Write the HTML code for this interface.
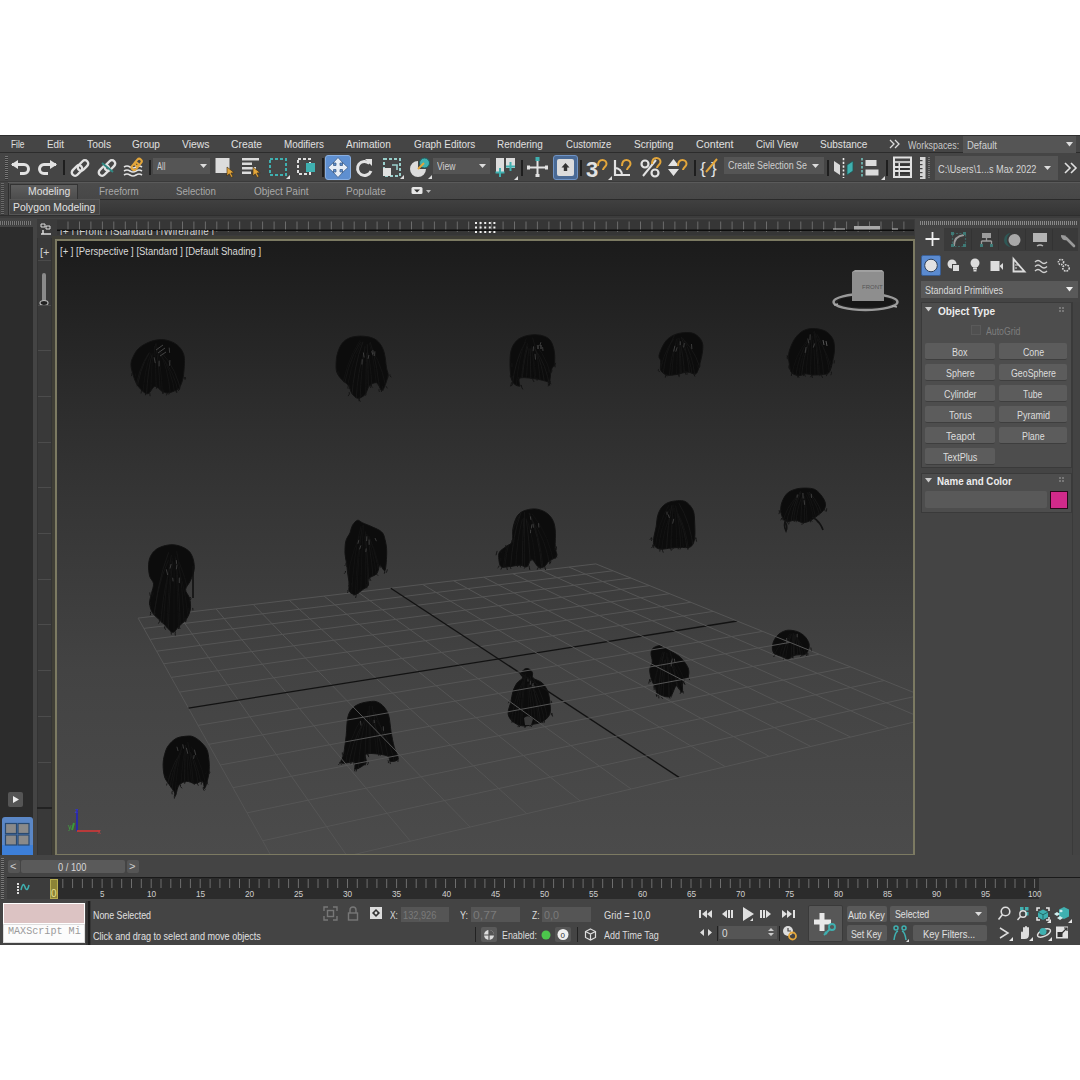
<!DOCTYPE html>
<html><head><meta charset="utf-8">
<style>
*{margin:0;padding:0;box-sizing:border-box}
html,body{width:1080px;height:1080px;background:#fff;overflow:hidden;font-family:"Liberation Sans",sans-serif;font-size:11px;color:#ddd}
.a{position:absolute}
.t{position:absolute;white-space:nowrap;line-height:1}
svg{overflow:visible}
</style></head><body>

<div class="a" style="left:0px;top:135px;width:1080px;height:810px;background:#444;"></div>
<div class="a" style="left:0px;top:135px;width:1080px;height:18px;background:#454545;"></div>
<div class="a" style="left:0px;top:152px;width:1080px;height:1px;background:#2c2c2c;"></div>
<div class="a" style="left:0px;top:135px;width:1080px;height:1px;background:#2e2e2e;"></div>
<div class="t" style="left:10.50px;top:139px;font-size:11px;color:#e0e0e0;transform:scaleX(0.761);transform-origin:0 0;">File</div>
<div class="t" style="left:47.00px;top:139px;font-size:11px;color:#e0e0e0;transform:scaleX(0.895);transform-origin:0 0;">Edit</div>
<div class="t" style="left:87.00px;top:139px;font-size:11px;color:#e0e0e0;transform:scaleX(0.937);transform-origin:0 0;">Tools</div>
<div class="t" style="left:132.00px;top:139px;font-size:11px;color:#e0e0e0;transform:scaleX(0.914);transform-origin:0 0;">Group</div>
<div class="t" style="left:182.00px;top:139px;font-size:11px;color:#e0e0e0;transform:scaleX(0.944);transform-origin:0 0;">Views</div>
<div class="t" style="left:231.00px;top:139px;font-size:11px;color:#e0e0e0;transform:scaleX(0.939);transform-origin:0 0;">Create</div>
<div class="t" style="left:283.75px;top:139px;font-size:11px;color:#e0e0e0;transform:scaleX(0.896);transform-origin:0 0;">Modifiers</div>
<div class="t" style="left:346.00px;top:139px;font-size:11px;color:#e0e0e0;transform:scaleX(0.916);transform-origin:0 0;">Animation</div>
<div class="t" style="left:413.75px;top:139px;font-size:11px;color:#e0e0e0;transform:scaleX(0.902);transform-origin:0 0;">Graph Editors</div>
<div class="t" style="left:496.75px;top:139px;font-size:11px;color:#e0e0e0;transform:scaleX(0.901);transform-origin:0 0;">Rendering</div>
<div class="t" style="left:565.75px;top:139px;font-size:11px;color:#e0e0e0;transform:scaleX(0.870);transform-origin:0 0;">Customize</div>
<div class="t" style="left:633.75px;top:139px;font-size:11px;color:#e0e0e0;transform:scaleX(0.918);transform-origin:0 0;">Scripting</div>
<div class="t" style="left:695.50px;top:139px;font-size:11px;color:#e0e0e0;transform:scaleX(0.974);transform-origin:0 0;">Content</div>
<div class="t" style="left:755.50px;top:139px;font-size:11px;color:#e0e0e0;transform:scaleX(0.884);transform-origin:0 0;">Civil View</div>
<div class="t" style="left:820.00px;top:139px;font-size:11px;color:#e0e0e0;transform:scaleX(0.913);transform-origin:0 0;">Substance</div>
<svg class="a" style="left:889px;top:139px;" width="11" height="10" viewBox="0 0 11 10"><path d="M1 1L5 5L1 9M6 1L10 5L6 9" fill="none" stroke="#dcdcdc" stroke-width="1.3"/></svg>
<div class="t" style="left:907.50px;top:141px;font-size:10px;color:#c8c8c8;transform:scaleX(0.889);transform-origin:0 0;">Workspaces:</div>
<div class="a" style="left:963px;top:136px;width:113px;height:17px;background:#555;"></div>
<div class="t" style="left:967.00px;top:141px;font-size:10px;color:#d0d0d0;transform:scaleX(0.945);transform-origin:0 0;">Default</div>
<svg class="a" style="left:1066px;top:142px;" width="8" height="5" viewBox="0 0 8 5"><path d="M0 0H7L3.5 4.5Z" fill="#ddd"/></svg>
<div class="a" style="left:0px;top:153px;width:1080px;height:29px;background:#454545;"></div>
<div class="a" style="left:0px;top:181px;width:1080px;height:1px;background:#3a3a3a;"></div>
<div class="a" style="left:5px;top:156px;width:3px;height:24px;background:repeating-linear-gradient(#777 0 1px,#333 1px 2px);"></div>
<svg class="a" style="left:10px;top:159px;" width="22" height="18" viewBox="0 0 22 18"><path d="M2 5.5H14a4.5 4.5 0 0 1 0 9H10" stroke="#e2e2e2" stroke-width="3" fill="none"/><path d="M1 5.5L8 1V10Z" fill="#e2e2e2"/></svg>
<svg class="a" style="left:36px;top:159px;" width="22" height="18" viewBox="0 0 22 18"><path d="M20 5.5H8a4.5 4.5 0 0 0 0 9H12" stroke="#e2e2e2" stroke-width="3" fill="none"/><path d="M21 5.5L14 1V10Z" fill="#e2e2e2"/></svg>
<div class="a" style="left:63px;top:160px;width:2px;height:15px;background:#1e1e1e;"></div>
<svg class="a" style="left:71px;top:160px;" width="18" height="16" viewBox="0 0 18 16"><g fill="none" stroke="#e2e2e2" stroke-width="2.4"><rect x="-3.3" y="-6" width="6.6" height="12" rx="3.3" transform="translate(6 10.5) rotate(45)"/><rect x="-3.3" y="-6" width="6.6" height="12" rx="3.3" transform="translate(12 5.5) rotate(45)"/></g></svg>
<svg class="a" style="left:98px;top:160px;" width="18" height="16" viewBox="0 0 18 16"><g fill="none" stroke="#e2e2e2" stroke-width="2.4"><rect x="-3.3" y="-6" width="6.6" height="12" rx="3.3" transform="translate(6 10.5) rotate(45)"/><rect x="-3.3" y="-6" width="6.6" height="12" rx="3.3" transform="translate(12 5.5) rotate(45)"/></g><path d="M4 3L15 12" stroke="#2f8a84" stroke-width="2"/></svg>
<svg class="a" style="left:123px;top:157px;" width="21" height="20" viewBox="0 0 21 20"><g fill="none" stroke="#e2e2e2" stroke-width="1.6"><path d="M1 10q3-2 6 0t6 0t6 0"/><path d="M1 14q3-2 6 0t6 0t6 0"/><path d="M1 18q3-2 6 0t6 0t6 0"/></g><g fill="none" stroke="#e3a63b" stroke-width="2"><rect x="-2.5" y="-6" width="5" height="8" rx="2.5" transform="translate(14 7) rotate(40)"/><rect x="-2.5" y="-1" width="5" height="8" rx="2.5" transform="translate(14 7) rotate(40)"/></g></svg>
<div class="a" style="left:149px;top:160px;width:2px;height:15px;background:#1e1e1e;"></div>
<div class="a" style="left:153px;top:158px;width:57px;height:16px;background:#555;"></div>
<div class="t" style="left:157.00px;top:162px;font-size:10px;color:#cfcfcf;transform:scaleX(0.764);transform-origin:0 0;">All</div>
<svg class="a" style="left:200px;top:164px;" width="7" height="4" viewBox="0 0 7 4"><path d="M0 0H7L3.5 4Z" fill="#ddd"/></svg>
<svg class="a" style="left:214px;top:157px;" width="22" height="22" viewBox="0 0 22 22"><rect x="1.5" y="1" width="14" height="15" fill="#dcdcdc"/><path d="M13 10l0 9l2.3-2.2l2 3.6l1.6-.9l-2-3.5l3.2-.3z" fill="#e3a63b" stroke="#3a2a10" stroke-width=".6"/></svg>
<svg class="a" style="left:241px;top:157px;" width="22" height="22" viewBox="0 0 22 22"><g fill="#dcdcdc"><rect x="1" y="1" width="17" height="2.5"/><rect x="1" y="5.5" width="10" height="2.5"/><rect x="1" y="10" width="14" height="2.5"/><rect x="1" y="14.5" width="9" height="2.5"/></g><path d="M12 10l0 9l2.3-2.2l2 3.6l1.6-.9l-2-3.5l3.2-.3z" fill="#e3a63b" stroke="#3a2a10" stroke-width=".6"/></svg>
<svg class="a" style="left:268px;top:157px;" width="22" height="22" viewBox="0 0 22 22"><rect x="2" y="2" width="16" height="16" fill="none" stroke="#3fb0b0" stroke-width="2" stroke-dasharray="3 2"/><path d="M22 22h-4l4-4z" fill="#ddd"/></svg>
<svg class="a" style="left:296px;top:157px;" width="22" height="22" viewBox="0 0 22 22"><rect x="2" y="2" width="12" height="15" fill="none" stroke="#e0e0e0" stroke-width="2" stroke-dasharray="3 2"/><rect x="10" y="6" width="9" height="9" fill="#3fb0b0"/></svg>
<div class="a" style="left:322px;top:158px;width:2px;height:19px;background:#1e1e1e;"></div>
<div class="a" style="left:325px;top:155px;width:26px;height:25px;background:#5e8fd0;border-radius:3px;border:1px solid #88aee0"></div>
<svg class="a" style="left:325px;top:155px;" width="26" height="25" viewBox="0 0 26 25"><path d="M13 2.5L18 8H15V10.5H17.5V7.5L23 12.5L17.5 17.5V14.5H15V17H18L13 22.5L8 17H11V14.5H8.5V17.5L3 12.5L8.5 7.5V10.5H11V8H8Z" fill="#e8eef6" stroke="#3f5f8a" stroke-width=".8"/></svg>
<svg class="a" style="left:356px;top:157px;" width="18" height="22" viewBox="0 0 18 22"><path d="M13.5 6.5A7 7 0 1 0 15 14" fill="none" stroke="#e2e2e2" stroke-width="3"/><path d="M9 2h7v7z" fill="#e2e2e2"/></svg>
<svg class="a" style="left:381px;top:157px;" width="23" height="22" viewBox="0 0 23 22"><rect x="3" y="2" width="16" height="17" fill="none" stroke="#9ad0cc" stroke-width="2" stroke-dasharray="3 2"/><rect x="2" y="11" width="8" height="8" fill="#e0e0e0"/><path d="M11 8h5v5" fill="none" stroke="#9ad0cc" stroke-width="1.6"/><path d="M23 22h-4l4-4z" fill="#ddd"/></svg>
<svg class="a" style="left:409px;top:157px;" width="23" height="22" viewBox="0 0 23 22"><path d="M9 12V4A8 8 0 1 0 17 12Z" fill="#dcdcdc"/><circle cx="15.5" cy="6" r="5" fill="#3fb0b0" stroke="#1e5e5e" stroke-width="1"/><path d="M9 12L15 6" stroke="#e3a63b" stroke-width="2"/><path d="M23 22h-4l4-4z" fill="#ddd"/></svg>
<div class="a" style="left:433px;top:158px;width:57px;height:16px;background:#555;"></div>
<div class="t" style="left:437.00px;top:162px;font-size:10px;color:#cfcfcf;transform:scaleX(0.860);transform-origin:0 0;">View</div>
<svg class="a" style="left:479px;top:164px;" width="7" height="4" viewBox="0 0 7 4"><path d="M0 0H7L3.5 4Z" fill="#ddd"/></svg>
<svg class="a" style="left:494px;top:156px;" width="24" height="24" viewBox="0 0 24 24"><rect x="2" y="2" width="8" height="15" fill="#dcdcdc"/><rect x="12" y="2" width="9" height="10" fill="#dcdcdc"/><g stroke="#3fb0b0" stroke-width="2"><path d="M6 12v9M1.5 16.5h9"/><path d="M16.5 6v9M12 10.5h9"/></g><path d="M24 24h-4l4-4z" fill="#ddd"/></svg>
<div class="a" style="left:521px;top:160px;width:2px;height:16px;background:#1e1e1e;"></div>
<svg class="a" style="left:527px;top:156px;" width="21" height="22" viewBox="0 0 21 22"><g stroke="#e2e2e2" stroke-width="2"><path d="M10.5 4V20M1 11.5H20"/></g><g fill="#e2e2e2"><rect x="0" y="9.5" width="3" height="4"/><rect x="18" y="9.5" width="3" height="4"/><rect x="8.5" y="18" width="4" height="3"/></g><rect x="8.5" y="1" width="4" height="4" fill="#3fb0b0"/></svg>
<div class="a" style="left:553px;top:155px;width:25px;height:25px;background:#4a6a95;border-radius:3px;border:1px solid #6f93c4"></div>
<div class="a" style="left:557px;top:159px;width:17px;height:17px;background:#dcdcdc;border-radius:2px"></div>
<svg class="a" style="left:557px;top:159px;" width="17" height="17" viewBox="0 0 17 17"><path d="M8.5 4l4 4.5h-2.3v3.5h-3.4v-3.5h-2.3z" fill="#333"/></svg>
<div class="a" style="left:580px;top:160px;width:2px;height:16px;background:#1e1e1e;"></div>
<svg class="a" style="left:586px;top:156px;" width="26" height="24" viewBox="0 0 26 24"><text x="0" y="21" font-family="Liberation Sans" font-weight="bold" font-size="22" fill="#e2e2e2">3</text><path d="M12 10c0-4 2-6 4.5-6s4 2 4 4c0 2.5-3.5 3.5-3.5 6" fill="none" stroke="#e3a63b" stroke-width="2"/><path d="M26 24h-4l4-4z" fill="#ddd"/></svg>
<svg class="a" style="left:613px;top:156px;" width="22" height="24" viewBox="0 0 22 24"><path d="M2 4V19H17" fill="none" stroke="#e2e2e2" stroke-width="2.2"/><path d="M2 12a7 7 0 0 1 7 7" fill="none" stroke="#e2e2e2" stroke-width="2"/><path d="M9 10c0-4 2-6 4.5-6s4 2 4 4c0 2.5-3.5 3.5-3.5 6" fill="none" stroke="#e3a63b" stroke-width="2"/></svg>
<svg class="a" style="left:640px;top:156px;" width="22" height="24" viewBox="0 0 22 24"><circle cx="5" cy="8" r="3.5" fill="none" stroke="#e2e2e2" stroke-width="2.2"/><circle cx="15" cy="17" r="3.5" fill="none" stroke="#e2e2e2" stroke-width="2.2"/><path d="M3 20L16 4" stroke="#e2e2e2" stroke-width="2"/><path d="M12 8c0-4 2-6 4.5-6s4 2 4 4c0 2.5-3.5 3.5-3.5 6" fill="none" stroke="#e3a63b" stroke-width="2"/></svg>
<svg class="a" style="left:667px;top:156px;" width="22" height="24" viewBox="0 0 22 24"><path d="M1 10L6.5 3L12 10Z M1 13L6.5 20L12 13Z" fill="#e2e2e2"/><path d="M11 10c0-4 2-6 4.5-6s4 2 4 4c0 2.5-3.5 3.5-3.5 6" fill="none" stroke="#e3a63b" stroke-width="2"/></svg>
<div class="a" style="left:694px;top:160px;width:2px;height:16px;background:#1e1e1e;"></div>
<svg class="a" style="left:700px;top:156px;" width="22" height="24" viewBox="0 0 22 24"><text x="0" y="18" font-family="Liberation Sans" font-size="17" fill="#e2e2e2">{</text><text x="11" y="18" font-family="Liberation Sans" font-size="17" fill="#e2e2e2">}</text><path d="M6 16L17 3" stroke="#e3a63b" stroke-width="2"/></svg>
<div class="a" style="left:724px;top:157px;width:100px;height:17px;background:#555;"></div>
<div class="t" style="left:728.30px;top:161px;font-size:10px;color:#cfcfcf;transform:scaleX(0.888);transform-origin:0 0;">Create Selection Se</div>
<svg class="a" style="left:812px;top:164px;" width="7" height="4" viewBox="0 0 7 4"><path d="M0 0H7L3.5 4Z" fill="#ddd"/></svg>
<div class="a" style="left:827px;top:160px;width:2px;height:16px;background:#1e1e1e;"></div>
<svg class="a" style="left:832px;top:156px;" width="24" height="24" viewBox="0 0 24 24"><path d="M2 5L8 9V19L2 15Z" fill="#d8d8d8"/><path d="M21 5L15 9V19L21 15Z" fill="#3fb0b0" stroke="#1f5654" stroke-width=".8"/><path d="M11.5 2V22" stroke="#eee" stroke-width="1.6" stroke-dasharray="2.2 1.6"/></svg>
<svg class="a" style="left:860px;top:156px;" width="25" height="24" viewBox="0 0 25 24"><path d="M2 2V22" stroke="#6aa8a4" stroke-width="2" stroke-dasharray="2.5 1.5"/><rect x="5.5" y="4" width="11" height="6" fill="#dcdcdc"/><rect x="5.5" y="13.5" width="13" height="6" fill="#dcdcdc"/><path d="M25 24h-4l4-4z" fill="#ddd"/></svg>
<div class="a" style="left:886px;top:160px;width:2px;height:16px;background:#1e1e1e;"></div>
<svg class="a" style="left:893px;top:156px;" width="20" height="23" viewBox="0 0 20 23"><rect x="1" y="1.5" width="17" height="19.5" fill="none" stroke="#e2e2e2" stroke-width="2"/><path d="M1 6H18" stroke="#e2e2e2" stroke-width="1.6"/><g fill="#333"><rect x="3" y="8" width="2.5" height="2"/><rect x="7" y="8" width="9" height="2"/><rect x="3" y="12" width="2.5" height="2"/><rect x="7" y="12" width="9" height="2"/><rect x="3" y="16" width="2.5" height="2"/><rect x="7" y="16" width="9" height="2"/></g><g fill="#e2e2e2"><rect x="2" y="10" width="15" height="2"/><rect x="2" y="14" width="15" height="2"/><rect x="5.5" y="7" width="1.5" height="13"/></g></svg>
<svg class="a" style="left:919px;top:156px;" width="14" height="24" viewBox="0 0 14 24"><rect x="1" y="1" width="5.5" height="22" fill="#d6d6d6"/><g fill="#444"><rect x="1" y="4" width="2.5" height="1.2"/><rect x="1" y="8" width="2.5" height="1.2"/><rect x="1" y="12" width="2.5" height="1.2"/><rect x="1" y="16" width="2.5" height="1.2"/><rect x="1" y="20" width="2.5" height="1.2"/></g><path d="M10 1V23" stroke="#777" stroke-width="2" stroke-dasharray="1 1"/></svg>
<div class="a" style="left:935px;top:156px;width:123px;height:24px;background:#555;"></div>
<div class="t" style="left:938.30px;top:164px;font-size:11px;color:#d6d6d6;transform:scaleX(0.834);transform-origin:0 0;">C:\Users\1...s Max 2022</div>
<svg class="a" style="left:1044px;top:166px;" width="7" height="4" viewBox="0 0 7 4"><path d="M0 0H7L3.5 4Z" fill="#ddd"/></svg>
<svg class="a" style="left:1064px;top:162px;" width="13" height="12" viewBox="0 0 13 12"><path d="M1 1L6 6L1 11M7 1L12 6L7 11" fill="none" stroke="#e0e0e0" stroke-width="1.6"/></svg>
<div class="a" style="left:0px;top:182px;width:1080px;height:36px;background:#444;"></div>
<div class="a" style="left:0px;top:183px;width:5px;height:34px;background:repeating-linear-gradient(#6a6a6a 0 1px,#3a3a3a 1px 2px);left:1px;width:3px"></div>
<div class="a" style="left:8px;top:182px;width:1072px;height:1px;background:#5a5a5a;"></div>
<div class="a" style="left:8px;top:183px;width:1072px;height:16px;background:linear-gradient(#4c4c4c,#474747);"></div>
<div class="a" style="left:8px;top:183px;width:1px;height:33px;background:#2e2e2e;"></div>
<div class="a" style="left:10px;top:184px;width:68px;height:16px;background:linear-gradient(#5e5e5e,#4b4b4b);border:1px solid #333;border-bottom:none"></div>
<div class="t" style="left:28.40px;top:186px;font-size:11px;color:#e0e0e0;transform:scaleX(0.946);transform-origin:0 0;">Modeling</div>
<div class="t" style="left:98.70px;top:186px;font-size:11px;color:#a8a8a8;transform:scaleX(0.890);transform-origin:0 0;">Freeform</div>
<div class="t" style="left:176.00px;top:186px;font-size:11px;color:#a8a8a8;transform:scaleX(0.880);transform-origin:0 0;">Selection</div>
<div class="t" style="left:253.80px;top:186px;font-size:11px;color:#a8a8a8;transform:scaleX(0.909);transform-origin:0 0;">Object Paint</div>
<div class="t" style="left:345.90px;top:186px;font-size:11px;color:#a8a8a8;transform:scaleX(0.915);transform-origin:0 0;">Populate</div>
<svg class="a" style="left:411px;top:186px;" width="20" height="10" viewBox="0 0 20 10"><rect x="0.5" y="1" width="11" height="7" rx="1.5" fill="#e6e6e6"/><path d="M3 3.5h6l-3 3z" fill="#333"/><path d="M15 4h5l-2.5 3z" fill="#bbb"/></svg>
<div class="a" style="left:78px;top:199px;width:1002px;height:1px;background:#2a2a2a;"></div>
<div class="a" style="left:9px;top:200px;width:1071px;height:15px;background:linear-gradient(#404040,#353535);"></div>
<div class="a" style="left:9px;top:199px;width:91px;height:16px;background:linear-gradient(#4a4a4a,#424242);border:1px solid #555"></div>
<div class="t" style="left:12.70px;top:202px;font-size:11px;color:#e2e2e2;transform:scaleX(0.941);transform-origin:0 0;">Polygon Modeling</div>
<div class="a" style="left:0px;top:215px;width:1080px;height:1px;background:#2e2e2e;"></div>
<div class="a" style="left:0px;top:216px;width:1080px;height:2px;background:#3c3c3c;"></div>
<div class="a" style="left:37px;top:219px;width:878px;height:20px;background:#3b3b3b;"></div>
<div class="a" style="left:57px;top:220px;width:857px;height:15px;background:#363636;"></div>
<svg class="a" style="left:57px;top:220px;" width="857" height="15" viewBox="0 0 857 15"><path d="M11.0 1.5V12" stroke="#6c6c6c" stroke-width="1"/><path d="M22.5 1.5V12" stroke="#6c6c6c" stroke-width="1"/><path d="M33.9 1.5V12" stroke="#6c6c6c" stroke-width="1"/><path d="M45.4 1.5V12" stroke="#6c6c6c" stroke-width="1"/><path d="M56.8 1.5V12" stroke="#6c6c6c" stroke-width="1"/><path d="M68.3 1.5V12" stroke="#6c6c6c" stroke-width="1"/><path d="M79.7 1.5V12" stroke="#6c6c6c" stroke-width="1"/><path d="M91.2 1.5V12" stroke="#6c6c6c" stroke-width="1"/><path d="M102.6 1.5V12" stroke="#6c6c6c" stroke-width="1"/><path d="M114.0 1.5V12" stroke="#6c6c6c" stroke-width="1"/><path d="M125.5 1.5V12" stroke="#6c6c6c" stroke-width="1"/><path d="M136.9 1.5V12" stroke="#6c6c6c" stroke-width="1"/><path d="M148.4 1.5V12" stroke="#6c6c6c" stroke-width="1"/><path d="M159.8 1.5V12" stroke="#6c6c6c" stroke-width="1"/><path d="M171.3 1.5V12" stroke="#6c6c6c" stroke-width="1"/><path d="M182.7 1.5V12" stroke="#6c6c6c" stroke-width="1"/><path d="M194.2 1.5V12" stroke="#6c6c6c" stroke-width="1"/><path d="M205.6 1.5V12" stroke="#6c6c6c" stroke-width="1"/><path d="M217.1 1.5V12" stroke="#6c6c6c" stroke-width="1"/><path d="M228.5 1.5V12" stroke="#6c6c6c" stroke-width="1"/><path d="M240.0 1.5V12" stroke="#6c6c6c" stroke-width="1"/><path d="M251.4 1.5V12" stroke="#6c6c6c" stroke-width="1"/><path d="M262.9 1.5V12" stroke="#6c6c6c" stroke-width="1"/><path d="M274.3 1.5V12" stroke="#6c6c6c" stroke-width="1"/><path d="M285.8 1.5V12" stroke="#6c6c6c" stroke-width="1"/><path d="M297.2 1.5V12" stroke="#6c6c6c" stroke-width="1"/><path d="M308.7 1.5V12" stroke="#6c6c6c" stroke-width="1"/><path d="M320.1 1.5V12" stroke="#6c6c6c" stroke-width="1"/><path d="M331.6 1.5V12" stroke="#6c6c6c" stroke-width="1"/><path d="M343.0 1.5V12" stroke="#6c6c6c" stroke-width="1"/><path d="M354.5 1.5V12" stroke="#6c6c6c" stroke-width="1"/><path d="M365.9 1.5V12" stroke="#6c6c6c" stroke-width="1"/><path d="M377.4 1.5V12" stroke="#6c6c6c" stroke-width="1"/><path d="M388.8 1.5V12" stroke="#6c6c6c" stroke-width="1"/><path d="M400.3 1.5V12" stroke="#6c6c6c" stroke-width="1"/><path d="M411.7 1.5V12" stroke="#6c6c6c" stroke-width="1"/><path d="M423.2 1.5V12" stroke="#6c6c6c" stroke-width="1"/><path d="M434.6 1.5V12" stroke="#6c6c6c" stroke-width="1"/><path d="M446.1 1.5V12" stroke="#6c6c6c" stroke-width="1"/><path d="M457.5 1.5V12" stroke="#6c6c6c" stroke-width="1"/><path d="M469.0 1.5V12" stroke="#6c6c6c" stroke-width="1"/><path d="M480.4 1.5V12" stroke="#6c6c6c" stroke-width="1"/><path d="M491.9 1.5V12" stroke="#6c6c6c" stroke-width="1"/><path d="M503.3 1.5V12" stroke="#6c6c6c" stroke-width="1"/><path d="M514.8 1.5V12" stroke="#6c6c6c" stroke-width="1"/><path d="M526.2 1.5V12" stroke="#6c6c6c" stroke-width="1"/><path d="M537.7 1.5V12" stroke="#6c6c6c" stroke-width="1"/><path d="M549.2 1.5V12" stroke="#6c6c6c" stroke-width="1"/><path d="M560.6 1.5V12" stroke="#6c6c6c" stroke-width="1"/><path d="M572.1 1.5V12" stroke="#6c6c6c" stroke-width="1"/><path d="M583.5 1.5V12" stroke="#6c6c6c" stroke-width="1"/><path d="M595.0 1.5V12" stroke="#6c6c6c" stroke-width="1"/><path d="M606.4 1.5V12" stroke="#6c6c6c" stroke-width="1"/><path d="M617.9 1.5V12" stroke="#6c6c6c" stroke-width="1"/><path d="M629.3 1.5V12" stroke="#6c6c6c" stroke-width="1"/><path d="M640.8 1.5V12" stroke="#6c6c6c" stroke-width="1"/><path d="M652.2 1.5V12" stroke="#6c6c6c" stroke-width="1"/><path d="M663.7 1.5V12" stroke="#6c6c6c" stroke-width="1"/><path d="M675.1 1.5V12" stroke="#6c6c6c" stroke-width="1"/><path d="M686.6 1.5V12" stroke="#6c6c6c" stroke-width="1"/><path d="M698.0 1.5V12" stroke="#6c6c6c" stroke-width="1"/><path d="M709.5 1.5V12" stroke="#6c6c6c" stroke-width="1"/><path d="M720.9 1.5V12" stroke="#6c6c6c" stroke-width="1"/><path d="M732.4 1.5V12" stroke="#6c6c6c" stroke-width="1"/><path d="M743.8 1.5V12" stroke="#6c6c6c" stroke-width="1"/><path d="M755.3 1.5V12" stroke="#6c6c6c" stroke-width="1"/><path d="M766.7 1.5V12" stroke="#6c6c6c" stroke-width="1"/><path d="M778.2 1.5V12" stroke="#6c6c6c" stroke-width="1"/><path d="M789.6 1.5V12" stroke="#6c6c6c" stroke-width="1"/><path d="M801.1 1.5V12" stroke="#6c6c6c" stroke-width="1"/><path d="M812.5 1.5V12" stroke="#6c6c6c" stroke-width="1"/><path d="M824.0 1.5V12" stroke="#6c6c6c" stroke-width="1"/><path d="M835.4 1.5V12" stroke="#6c6c6c" stroke-width="1"/><path d="M846.9 1.5V12" stroke="#6c6c6c" stroke-width="1"/><path d="M0 10.2H857" stroke="#0e0e0e" stroke-width="1.5"/></svg>
<div class="a" style="left:0;top:230px;width:1080px;height:5px;overflow:hidden">
<div class="t" style="left:59.80px;top:-3px;font-size:10px;color:#d0d0d0;transform:scaleX(0.978);transform-origin:0 0;">[+ ] [Front ] [Standard ] [Wireframe ]</div>
</div>
<svg class="a" style="left:39px;top:222px;" width="14" height="13" viewBox="0 0 14 13"><path d="M2 2h4v3H2zM7 4h4v3H7z" fill="none" stroke="#ddd" stroke-width="1"/><path d="M2 12h10M4 8v4" stroke="#ddd" stroke-width="1.5"/></svg>
<svg class="a" style="left:474px;top:221px;" width="24" height="13" viewBox="0 0 24 13"><rect x="1.0" y="1.0" width="2" height="2" fill="#eee"/><rect x="1.0" y="5.5" width="2" height="2" fill="#eee"/><rect x="1.0" y="10.0" width="2" height="2" fill="#eee"/><rect x="5.6" y="1.0" width="2" height="2" fill="#eee"/><rect x="5.6" y="5.5" width="2" height="2" fill="#eee"/><rect x="5.6" y="10.0" width="2" height="2" fill="#eee"/><rect x="10.2" y="1.0" width="2" height="2" fill="#eee"/><rect x="10.2" y="5.5" width="2" height="2" fill="#eee"/><rect x="10.2" y="10.0" width="2" height="2" fill="#eee"/><rect x="14.8" y="1.0" width="2" height="2" fill="#eee"/><rect x="14.8" y="5.5" width="2" height="2" fill="#eee"/><rect x="14.8" y="10.0" width="2" height="2" fill="#eee"/><rect x="19.4" y="1.0" width="2" height="2" fill="#eee"/><rect x="19.4" y="5.5" width="2" height="2" fill="#eee"/><rect x="19.4" y="10.0" width="2" height="2" fill="#eee"/></svg>
<svg class="a" style="left:832px;top:225px;" width="70" height="8" viewBox="0 0 70 8"><rect x="22" y="1" width="26" height="3.5" fill="#a8a8a8"/><path d="M1 4h12M60 4h6" stroke="#bbb" stroke-width="1.2"/></svg>
<div class="a" style="left:0px;top:221px;width:31px;height:4px;background:repeating-linear-gradient(90deg,#777 0 1px,#3a3a3a 1px 2px);"></div>
<div class="a" style="left:0px;top:227px;width:33px;height:628px;background:#2c2c2c;"></div>
<div class="a" style="left:37px;top:238px;width:15px;height:617px;background:#393939;border-left:1px solid #333;border-right:1px solid #333"></div>
<div class="t" style="left:40px;top:247px;font-size:11px;color:#d0d0d0;">[+</div>
<div class="a" style="left:38px;top:260px;width:13px;height:1px;background:#4a4a4a;"></div>
<div class="a" style="left:42px;top:273px;width:4px;height:30px;background:#8a8a8a;border-radius:2px"></div>
<svg class="a" style="left:38px;top:299px;" width="13" height="8" viewBox="0 0 13 8"><ellipse cx="6" cy="4" rx="4" ry="2.5" fill="#222" stroke="#bbb" stroke-width="1.2"/></svg>
<div class="a" style="left:38px;top:305px;width:13px;height:1px;background:#4c4c4c;"></div>
<div class="a" style="left:38px;top:350px;width:13px;height:1px;background:#4c4c4c;"></div>
<div class="a" style="left:38px;top:396px;width:13px;height:1px;background:#4c4c4c;"></div>
<div class="a" style="left:38px;top:442px;width:13px;height:1px;background:#4c4c4c;"></div>
<div class="a" style="left:38px;top:487px;width:13px;height:1px;background:#4c4c4c;"></div>
<div class="a" style="left:38px;top:533px;width:13px;height:1px;background:#4c4c4c;"></div>
<div class="a" style="left:38px;top:579px;width:13px;height:1px;background:#4c4c4c;"></div>
<div class="a" style="left:38px;top:624px;width:13px;height:1px;background:#4c4c4c;"></div>
<div class="a" style="left:38px;top:670px;width:13px;height:1px;background:#4c4c4c;"></div>
<div class="a" style="left:38px;top:716px;width:13px;height:1px;background:#4c4c4c;"></div>
<div class="a" style="left:38px;top:762px;width:13px;height:1px;background:#4c4c4c;"></div>
<div class="a" style="left:37px;top:807px;width:15px;height:2px;background:#222;"></div>
<div class="a" style="left:8px;top:792px;width:15px;height:15px;background:#555;border-radius:2px"></div>
<svg class="a" style="left:8px;top:792px;" width="15" height="15" viewBox="0 0 15 15"><path d="M5 4L11 7.5L5 11Z" fill="#eee"/></svg>
<div class="a" style="left:2px;top:817px;width:31px;height:38px;background:#5b87c6;border-radius:3px"></div>
<div class="a" style="left:2px;top:845px;width:31px;height:10px;background:#3d7fd8;"></div>
<svg class="a" style="left:4px;top:822px;" width="28" height="24" viewBox="0 0 28 24"><g fill="#8a8a8a" stroke="#2a4a70" stroke-width="1.2"><rect x="1.5" y="1.5" width="11" height="10"/><rect x="14" y="1.5" width="11" height="10"/><rect x="1.5" y="13" width="11" height="10"/><rect x="14" y="13" width="11" height="10"/></g></svg>
<div class="a" style="left:52px;top:236px;width:866px;height:624px;background:#3f3e36;"></div>
<div class="a" style="left:55px;top:239px;width:860px;height:617px;background:#7c7a62;"></div>
<div class="a" style="left:57px;top:241px;width:856px;height:613px;background:#26241a;"></div>
<div class="a" style="left:57px;top:241px;width:856px;height:613px;background:linear-gradient(#1b1b1b 0%,#2c2c2c 26%,#353535 42%,#434343 70%,#4b4b4b 100%);"></div>
<svg class="a" style="left:0;top:0;overflow:hidden" width="1080" height="1080" viewBox="0 0 1080 1080"><defs><clipPath id="vp"><rect x="57" y="240" width="856" height="614"/></clipPath></defs><g clip-path="url(#vp)"><clipPath id="hc1"><path d="M161.5 339.6C157.8 339.6 153.4 340.4 149.6 341.9C145.8 343.4 141.3 345.8 138.5 348.5C135.7 351.2 133.8 355.2 132.6 358.0C131.3 360.8 130.9 362.8 131.0 365.5C131.1 368.2 132.1 371.4 133.0 374.4C133.9 377.4 134.8 380.6 136.3 383.3C137.8 386.0 140.2 389.0 142.2 390.7C144.1 392.4 145.9 394.4 148.0 393.7C150.1 393.0 152.6 386.8 154.8 386.3C157.1 385.8 159.4 389.6 161.5 390.7C163.6 391.8 165.2 393.0 167.4 393.0C169.6 393.0 172.8 391.6 174.8 390.7C176.8 389.8 177.9 389.9 179.3 387.8C180.7 385.7 182.2 382.1 183.0 378.0C183.8 373.9 184.3 367.2 184.4 363.3C184.5 359.4 184.5 357.1 183.7 354.4C182.8 351.7 181.3 349.1 179.3 347.0C177.3 344.9 174.9 343.1 171.9 341.9C168.9 340.7 165.2 339.6 161.5 339.6Z"/></clipPath><path d="M161.5 339.6C157.8 339.6 153.4 340.4 149.6 341.9C145.8 343.4 141.3 345.8 138.5 348.5C135.7 351.2 133.8 355.2 132.6 358.0C131.3 360.8 130.9 362.8 131.0 365.5C131.1 368.2 132.1 371.4 133.0 374.4C133.9 377.4 134.8 380.6 136.3 383.3C137.8 386.0 140.2 389.0 142.2 390.7C144.1 392.4 145.9 394.4 148.0 393.7C150.1 393.0 152.6 386.8 154.8 386.3C157.1 385.8 159.4 389.6 161.5 390.7C163.6 391.8 165.2 393.0 167.4 393.0C169.6 393.0 172.8 391.6 174.8 390.7C176.8 389.8 177.9 389.9 179.3 387.8C180.7 385.7 182.2 382.1 183.0 378.0C183.8 373.9 184.3 367.2 184.4 363.3C184.5 359.4 184.5 357.1 183.7 354.4C182.8 351.7 181.3 349.1 179.3 347.0C177.3 344.9 174.9 343.1 171.9 341.9C168.9 340.7 165.2 339.6 161.5 339.6Z" fill="#0c0c0c" stroke="#121212" stroke-width="1"/><g clip-path="url(#hc1)"><path d="M149.0 352.6Q137.5 369.9 134.6 395.7" stroke="#161616" stroke-width=".9" fill="none"/><path d="M149.4 352.6Q138.8 369.8 136.1 395.7" stroke="#181818" stroke-width=".9" fill="none"/><path d="M151.0 353.0Q144.4 370.1 142.7 395.7" stroke="#131313" stroke-width=".9" fill="none"/><path d="M152.0 354.4Q147.6 370.9 146.5 395.7" stroke="#181818" stroke-width=".9" fill="none"/><path d="M153.0 352.6Q151.2 369.8 150.8 395.7" stroke="#131313" stroke-width=".9" fill="none"/><path d="M154.4 345.9Q155.9 365.8 156.3 395.7" stroke="#151515" stroke-width=".9" fill="none"/><path d="M155.4 343.7Q159.3 364.5 160.3 395.7" stroke="#161616" stroke-width=".9" fill="none"/><path d="M156.0 342.6Q161.2 363.9 162.5 395.7" stroke="#131313" stroke-width=".9" fill="none"/><path d="M158.0 347.5Q168.1 366.8 170.6 395.7" stroke="#151515" stroke-width=".9" fill="none"/><path d="M159.1 352.1Q171.9 369.6 175.2 395.7" stroke="#151515" stroke-width=".9" fill="none"/><path d="M160.0 355.0Q175.0 371.3 178.8 395.7" stroke="#151515" stroke-width=".9" fill="none"/><path d="M160.7 351.5Q177.4 369.2 181.6 395.7" stroke="#181818" stroke-width=".9" fill="none"/><path d="M169.9 360.1l-0.3 5.7" stroke="#484848" stroke-width="1" opacity=".8"/><path d="M169.2 347.6l0.4 5.2" stroke="#484848" stroke-width="1" opacity=".8"/><path d="M154.1 357.3l1.2 5.9" stroke="#484848" stroke-width="1" opacity=".8"/><path d="M159.1 360.7l0.0 5.7" stroke="#484848" stroke-width="1" opacity=".8"/></g><path d="M131.4 373.4q0.9 1.4 -0.0 2.7M135.2 373.4q0.7 1.5 -0.1 3.0M137.5 382.3q0.3 1.5 -0.4 3.0M138.2 382.3q0.5 2.0 -1.2 3.9M143.0 389.7q-0.7 1.1 1.0 2.3M141.6 389.7q-0.1 1.9 -0.6 3.8M149.7 392.7q0.2 1.8 0.4 3.5M146.3 392.7q-1.0 1.3 -0.9 2.6M156.9 385.3q-0.2 1.7 -0.5 3.4M156.5 385.3q0.8 1.4 0.5 2.9M162.0 389.7q-0.2 1.9 1.1 3.8M163.8 389.7q0.0 2.2 -1.1 4.3M168.8 392.0q0.9 1.3 -0.1 2.5M166.7 392.0q0.9 1.7 -0.3 3.4M176.4 389.7q-1.0 1.5 0.1 3.0M176.2 389.7q0.2 1.4 0.9 2.8M180.0 386.8q-0.6 1.7 -1.2 3.4M179.6 386.8q0.9 2.1 -1.4 4.1M185.2 377.0q0.7 1.1 -0.1 2.2M184.3 377.0q-0.5 1.4 0.9 2.7" stroke="#121212" stroke-width=".9" fill="none"/><path d="M156 350l7 -5M158 353l7-5M160 356l6-4" stroke="#444" stroke-width="1"/><clipPath id="hc2"><path d="M360.6 336.1C356.8 336.1 352.5 336.8 349.4 338.0C346.3 339.2 344.0 341.0 342.0 343.5C340.0 346.0 338.6 349.8 337.6 353.1C336.6 356.4 336.2 360.3 336.1 363.5C336.0 366.7 335.9 369.7 336.9 372.4C337.9 375.1 340.0 377.6 342.0 379.8C344.0 382.0 347.1 383.5 348.7 385.7C350.3 387.9 350.2 391.0 351.7 393.1C353.2 395.2 355.4 398.1 357.6 398.3C359.8 398.6 363.0 396.7 365.0 394.6C367.0 392.5 367.4 387.7 369.4 385.7C371.4 383.7 374.9 382.1 376.9 382.8C378.9 383.6 380.1 389.5 381.3 390.2C382.5 390.9 383.2 389.7 384.3 387.2C385.4 384.7 387.6 378.6 388.0 375.4C388.4 372.2 387.1 371.7 386.5 368.0C385.9 364.3 385.4 357.2 384.3 353.1C383.2 349.0 381.8 346.0 379.8 343.5C377.8 341.0 375.6 339.2 372.4 338.0C369.2 336.8 364.4 336.1 360.6 336.1Z"/></clipPath><path d="M360.6 336.1C356.8 336.1 352.5 336.8 349.4 338.0C346.3 339.2 344.0 341.0 342.0 343.5C340.0 346.0 338.6 349.8 337.6 353.1C336.6 356.4 336.2 360.3 336.1 363.5C336.0 366.7 335.9 369.7 336.9 372.4C337.9 375.1 340.0 377.6 342.0 379.8C344.0 382.0 347.1 383.5 348.7 385.7C350.3 387.9 350.2 391.0 351.7 393.1C353.2 395.2 355.4 398.1 357.6 398.3C359.8 398.6 363.0 396.7 365.0 394.6C367.0 392.5 367.4 387.7 369.4 385.7C371.4 383.7 374.9 382.1 376.9 382.8C378.9 383.6 380.1 389.5 381.3 390.2C382.5 390.9 383.2 389.7 384.3 387.2C385.4 384.7 387.6 378.6 388.0 375.4C388.4 372.2 387.1 371.7 386.5 368.0C385.9 364.3 385.4 357.2 384.3 353.1C383.2 349.0 381.8 346.0 379.8 343.5C377.8 341.0 375.6 339.2 372.4 338.0C369.2 336.8 364.4 336.1 360.6 336.1Z" fill="#0c0c0c" stroke="#121212" stroke-width="1"/><g clip-path="url(#hc2)"><path d="M360.1 340.1Q344.1 364.2 340.1 400.3" stroke="#131313" stroke-width=".9" fill="none"/><path d="M360.6 341.8Q345.7 365.2 342.0 400.3" stroke="#161616" stroke-width=".9" fill="none"/><path d="M361.6 342.5Q349.0 365.6 345.9 400.3" stroke="#131313" stroke-width=".9" fill="none"/><path d="M363.0 341.7Q353.8 365.1 351.6 400.3" stroke="#181818" stroke-width=".9" fill="none"/><path d="M364.1 351.7Q357.7 371.1 356.1 400.3" stroke="#161616" stroke-width=".9" fill="none"/><path d="M365.1 346.1Q361.1 367.8 360.1 400.3" stroke="#161616" stroke-width=".9" fill="none"/><path d="M366.5 352.8Q366.0 371.8 365.8 400.3" stroke="#161616" stroke-width=".9" fill="none"/><path d="M367.2 344.2Q368.2 366.6 368.4 400.3" stroke="#181818" stroke-width=".9" fill="none"/><path d="M368.2 353.0Q371.7 371.9 372.6 400.3" stroke="#151515" stroke-width=".9" fill="none"/><path d="M369.4 342.9Q375.8 365.8 377.4 400.3" stroke="#131313" stroke-width=".9" fill="none"/><path d="M370.1 341.9Q378.2 365.3 380.2 400.3" stroke="#161616" stroke-width=".9" fill="none"/><path d="M372.0 349.7Q384.7 369.9 387.8 400.3" stroke="#151515" stroke-width=".9" fill="none"/><path d="M374.9 351.3l-0.3 4.6" stroke="#484848" stroke-width="1" opacity=".8"/><path d="M372.9 349.9l0.3 4.1" stroke="#484848" stroke-width="1" opacity=".8"/><path d="M371.7 351.3l1.4 4.2" stroke="#484848" stroke-width="1" opacity=".8"/><path d="M368.9 355.0l-0.8 3.8" stroke="#484848" stroke-width="1" opacity=".8"/><path d="M363.3 352.5l0.9 5.0" stroke="#484848" stroke-width="1" opacity=".8"/><path d="M362.3 359.3l-0.4 5.2" stroke="#484848" stroke-width="1" opacity=".8"/></g><path d="M337.2 371.4q0.3 1.6 1.3 3.1M338.5 371.4q0.8 2.0 0.3 4.1M343.4 378.8q-0.4 1.6 0.9 3.2M343.7 378.8q0.0 1.7 0.3 3.4M348.2 384.7q-0.0 1.9 -0.4 3.8M349.6 384.7q0.6 2.1 -0.5 4.2M349.2 392.1q1.0 2.0 -1.2 4.0M352.1 392.1q0.2 1.1 0.5 2.1M359.7 397.3q-0.7 1.9 -0.7 3.9M359.2 397.3q-0.9 2.2 1.2 4.4M366.3 393.6q-0.3 1.1 -0.8 2.1M362.6 393.6q-0.9 1.1 -1.4 2.3M371.5 384.7q-0.7 1.5 1.3 2.9M370.6 384.7q-1.0 1.7 0.3 3.3M378.4 381.8q0.9 1.3 -1.5 2.6M379.1 381.8q0.5 1.8 -0.6 3.6M381.2 389.2q0.1 1.4 0.3 2.8M379.0 389.2q-0.2 1.3 0.4 2.7M382.6 386.2q-0.8 2.2 0.6 4.4M386.0 386.2q0.6 1.0 1.3 2.1M388.1 374.4q-0.0 2.0 -0.5 4.0M389.9 374.4q-0.5 1.4 1.4 2.9" stroke="#121212" stroke-width=".9" fill="none"/><clipPath id="hc3"><path d="M535.0 334.7C531.3 334.7 526.5 335.5 523.3 336.7C520.1 337.9 517.6 339.4 515.6 341.8C513.6 344.2 511.9 347.2 511.0 350.9C510.1 354.6 510.0 359.6 510.0 363.9C510.0 368.2 510.4 373.6 511.0 376.8C511.6 380.0 512.2 381.8 513.6 383.3C515.0 384.8 518.3 386.8 519.4 385.9C520.5 385.0 517.4 379.3 520.0 378.1C522.6 376.9 530.3 378.2 535.0 378.8C539.7 379.4 545.6 381.0 548.0 382.0C550.4 383.0 548.8 386.5 549.3 384.6C549.8 382.7 550.4 373.8 551.2 370.4C552.1 366.9 553.9 366.9 554.4 363.9C554.9 360.9 554.9 355.9 554.4 352.2C553.9 348.5 552.7 344.4 551.2 341.8C549.7 339.2 548.1 337.9 545.4 336.7C542.7 335.5 538.7 334.7 535.0 334.7Z"/></clipPath><path d="M535.0 334.7C531.3 334.7 526.5 335.5 523.3 336.7C520.1 337.9 517.6 339.4 515.6 341.8C513.6 344.2 511.9 347.2 511.0 350.9C510.1 354.6 510.0 359.6 510.0 363.9C510.0 368.2 510.4 373.6 511.0 376.8C511.6 380.0 512.2 381.8 513.6 383.3C515.0 384.8 518.3 386.8 519.4 385.9C520.5 385.0 517.4 379.3 520.0 378.1C522.6 376.9 530.3 378.2 535.0 378.8C539.7 379.4 545.6 381.0 548.0 382.0C550.4 383.0 548.8 386.5 549.3 384.6C549.8 382.7 550.4 373.8 551.2 370.4C552.1 366.9 553.9 366.9 554.4 363.9C554.9 360.9 554.9 355.9 554.4 352.2C553.9 348.5 552.7 344.4 551.2 341.8C549.7 339.2 548.1 337.9 545.4 336.7C542.7 335.5 538.7 334.7 535.0 334.7Z" fill="#0c0c0c" stroke="#121212" stroke-width="1"/><g clip-path="url(#hc3)"><path d="M525.4 342.0Q514.7 360.4 512.0 387.9" stroke="#181818" stroke-width=".9" fill="none"/><path d="M526.4 338.1Q518.1 358.0 516.1 387.9" stroke="#131313" stroke-width=".9" fill="none"/><path d="M527.6 343.3Q522.2 361.1 520.9 387.9" stroke="#151515" stroke-width=".9" fill="none"/><path d="M527.8 346.4Q522.9 363.0 521.7 387.9" stroke="#181818" stroke-width=".9" fill="none"/><path d="M529.0 348.3Q526.8 364.1 526.2 387.9" stroke="#151515" stroke-width=".9" fill="none"/><path d="M530.1 348.4Q530.7 364.2 530.9 387.9" stroke="#181818" stroke-width=".9" fill="none"/><path d="M531.2 345.9Q534.2 362.7 535.0 387.9" stroke="#131313" stroke-width=".9" fill="none"/><path d="M531.5 349.5Q535.4 364.9 536.4 387.9" stroke="#131313" stroke-width=".9" fill="none"/><path d="M532.6 337.7Q539.0 357.8 540.7 387.9" stroke="#161616" stroke-width=".9" fill="none"/><path d="M533.7 346.5Q542.8 363.0 545.0 387.9" stroke="#181818" stroke-width=".9" fill="none"/><path d="M534.8 349.1Q546.7 364.6 549.7 387.9" stroke="#181818" stroke-width=".9" fill="none"/><path d="M535.8 344.6Q549.9 361.9 553.5 387.9" stroke="#151515" stroke-width=".9" fill="none"/><path d="M540.9 342.2l-1.1 3.7" stroke="#484848" stroke-width="1" opacity=".8"/><path d="M542.6 347.1l0.4 3.9" stroke="#484848" stroke-width="1" opacity=".8"/><path d="M533.5 346.4l-0.4 4.8" stroke="#484848" stroke-width="1" opacity=".8"/><path d="M535.0 353.8l0.5 5.8" stroke="#484848" stroke-width="1" opacity=".8"/></g><path d="M511.8 362.9q0.3 2.2 -1.0 4.5M511.8 362.9q0.8 2.2 0.2 4.4M512.1 375.8q0.7 1.3 0.2 2.5M509.9 375.8q0.7 1.1 1.5 2.2M511.5 382.3q-0.2 2.0 -1.0 4.0M512.6 382.3q0.7 2.0 -1.4 3.9M520.0 384.9q0.4 1.1 -0.5 2.1M521.3 384.9q0.0 2.2 1.5 4.5M519.0 377.1q0.2 1.1 -1.4 2.2M518.5 377.1q0.2 1.5 -1.0 3.0M532.7 377.8q-0.4 2.1 1.4 4.2M537.0 377.8q-0.1 1.5 0.1 2.9M548.7 381.0q0.1 1.7 0.4 3.5M550.2 381.0q-0.1 1.6 0.7 3.3M548.0 383.6q1.0 1.4 0.1 2.8M549.5 383.6q-0.2 1.0 0.2 2.0M548.8 369.4q0.3 1.8 -1.3 3.5M551.8 369.4q0.4 1.6 -0.4 3.2M555.4 362.9q-1.0 1.9 -1.3 3.8M555.3 362.9q-0.5 2.2 -0.1 4.4" stroke="#121212" stroke-width=".9" fill="none"/><path d="M538 345v4M541 345v4" stroke="#555" stroke-width="1"/><clipPath id="hc4"><path d="M691.0 332.8C687.8 332.3 682.5 332.6 678.9 333.4C675.3 334.2 671.9 335.8 669.3 337.7C666.7 339.6 665.0 341.9 663.3 344.9C661.6 347.9 659.4 353.0 659.0 355.7C658.6 358.4 660.5 358.8 660.8 361.2C661.1 363.6 659.8 367.9 660.8 370.2C661.8 372.5 664.2 374.3 666.9 375.0C669.6 375.7 673.7 374.9 677.1 374.4C680.5 373.9 684.2 372.1 687.3 372.0C690.4 371.9 693.8 374.9 695.8 373.8C697.8 372.7 698.3 369.0 699.4 365.4C700.5 361.8 701.9 355.8 702.4 352.1C702.9 348.4 703.1 345.7 702.4 343.1C701.7 340.5 700.1 338.2 698.2 336.5C696.3 334.8 694.2 333.3 691.0 332.8Z"/></clipPath><path d="M691.0 332.8C687.8 332.3 682.5 332.6 678.9 333.4C675.3 334.2 671.9 335.8 669.3 337.7C666.7 339.6 665.0 341.9 663.3 344.9C661.6 347.9 659.4 353.0 659.0 355.7C658.6 358.4 660.5 358.8 660.8 361.2C661.1 363.6 659.8 367.9 660.8 370.2C661.8 372.5 664.2 374.3 666.9 375.0C669.6 375.7 673.7 374.9 677.1 374.4C680.5 373.9 684.2 372.1 687.3 372.0C690.4 371.9 693.8 374.9 695.8 373.8C697.8 372.7 698.3 369.0 699.4 365.4C700.5 361.8 701.9 355.8 702.4 352.1C702.9 348.4 703.1 345.7 702.4 343.1C701.7 340.5 700.1 338.2 698.2 336.5C696.3 334.8 694.2 333.3 691.0 332.8Z" fill="#0c0c0c" stroke="#121212" stroke-width="1"/><g clip-path="url(#hc4)"><path d="M673.6 339.1Q662.1 354.3 659.2 377.0" stroke="#151515" stroke-width=".9" fill="none"/><path d="M674.5 335.1Q665.1 351.9 662.8 377.0" stroke="#161616" stroke-width=".9" fill="none"/><path d="M676.1 343.0Q670.6 356.6 669.2 377.0" stroke="#151515" stroke-width=".9" fill="none"/><path d="M676.7 338.7Q672.7 354.0 671.7 377.0" stroke="#151515" stroke-width=".9" fill="none"/><path d="M678.0 337.7Q676.9 353.4 676.6 377.0" stroke="#131313" stroke-width=".9" fill="none"/><path d="M678.9 343.4Q679.9 356.9 680.2 377.0" stroke="#161616" stroke-width=".9" fill="none"/><path d="M679.1 338.2Q680.9 353.7 681.3 377.0" stroke="#161616" stroke-width=".9" fill="none"/><path d="M679.9 341.3Q683.6 355.6 684.5 377.0" stroke="#181818" stroke-width=".9" fill="none"/><path d="M681.2 336.8Q688.1 352.9 689.8 377.0" stroke="#181818" stroke-width=".9" fill="none"/><path d="M681.9 344.9Q690.4 357.7 692.5 377.0" stroke="#161616" stroke-width=".9" fill="none"/><path d="M682.6 338.0Q692.5 353.6 695.0 377.0" stroke="#161616" stroke-width=".9" fill="none"/><path d="M684.3 340.3Q698.4 355.0 702.0 377.0" stroke="#181818" stroke-width=".9" fill="none"/><path d="M680.3 341.3l-0.1 3.7" stroke="#484848" stroke-width="1" opacity=".8"/><path d="M677.1 347.3l-1.3 4.4" stroke="#484848" stroke-width="1" opacity=".8"/><path d="M691.5 344.0l0.4 5.1" stroke="#484848" stroke-width="1" opacity=".8"/><path d="M674.9 345.8l-1.3 5.7" stroke="#484848" stroke-width="1" opacity=".8"/><path d="M684.4 343.1l-0.9 4.3" stroke="#484848" stroke-width="1" opacity=".8"/></g><path d="M661.2 360.2q-0.6 1.8 -0.5 3.6M662.5 360.2q-0.4 1.9 0.2 3.8M662.6 369.2q0.9 1.2 -0.6 2.3M658.4 369.2q-0.8 1.4 1.4 2.9M665.8 374.0q-0.3 1.8 -0.5 3.7M666.0 374.0q0.3 1.2 1.1 2.4M678.9 373.4q-0.8 1.9 0.4 3.7M679.1 373.4q-0.5 1.4 0.3 2.7M685.6 371.0q-0.3 1.7 -0.1 3.4M686.6 371.0q1.0 2.0 0.2 4.0M695.5 372.8q0.8 1.3 -1.2 2.5M693.6 372.8q0.2 1.9 1.4 3.8M699.9 364.4q0.2 1.7 -0.5 3.4M697.1 364.4q-0.4 2.0 1.5 4.1" stroke="#121212" stroke-width=".9" fill="none"/><clipPath id="hc5"><path d="M812.7 328.5C809.0 328.5 805.7 329.4 802.8 331.0C799.9 332.6 797.5 335.1 795.4 337.9C793.3 340.7 791.5 344.7 790.4 347.8C789.2 350.9 788.6 353.4 788.5 356.5C788.4 359.6 789.3 363.7 789.8 366.4C790.3 369.1 790.1 371.1 791.6 372.6C793.1 374.2 796.1 375.5 798.5 375.7C800.9 375.9 803.5 373.9 805.9 373.8C808.3 373.7 810.1 374.9 812.7 375.0C815.3 375.1 818.7 374.9 821.4 374.5C824.1 374.1 827.0 374.8 828.9 372.6C830.8 370.4 831.7 365.3 832.6 361.4C833.5 357.5 834.5 352.8 834.5 349.0C834.5 345.2 834.2 341.5 832.6 338.5C831.0 335.5 828.4 332.7 825.1 331.0C821.8 329.3 816.4 328.5 812.7 328.5Z"/></clipPath><path d="M812.7 328.5C809.0 328.5 805.7 329.4 802.8 331.0C799.9 332.6 797.5 335.1 795.4 337.9C793.3 340.7 791.5 344.7 790.4 347.8C789.2 350.9 788.6 353.4 788.5 356.5C788.4 359.6 789.3 363.7 789.8 366.4C790.3 369.1 790.1 371.1 791.6 372.6C793.1 374.2 796.1 375.5 798.5 375.7C800.9 375.9 803.5 373.9 805.9 373.8C808.3 373.7 810.1 374.9 812.7 375.0C815.3 375.1 818.7 374.9 821.4 374.5C824.1 374.1 827.0 374.8 828.9 372.6C830.8 370.4 831.7 365.3 832.6 361.4C833.5 357.5 834.5 352.8 834.5 349.0C834.5 345.2 834.2 341.5 832.6 338.5C831.0 335.5 828.4 332.7 825.1 331.0C821.8 329.3 816.4 328.5 812.7 328.5Z" fill="#0c0c0c" stroke="#121212" stroke-width="1"/><g clip-path="url(#hc5)"><path d="M807.3 340.2Q794.6 355.2 791.4 377.7" stroke="#131313" stroke-width=".9" fill="none"/><path d="M808.4 340.0Q798.2 355.1 795.6 377.7" stroke="#151515" stroke-width=".9" fill="none"/><path d="M809.1 341.5Q800.8 356.0 798.7 377.7" stroke="#131313" stroke-width=".9" fill="none"/><path d="M809.8 341.1Q803.1 355.7 801.4 377.7" stroke="#181818" stroke-width=".9" fill="none"/><path d="M811.0 337.6Q806.9 353.7 805.9 377.7" stroke="#131313" stroke-width=".9" fill="none"/><path d="M812.1 335.7Q810.8 352.5 810.5 377.7" stroke="#151515" stroke-width=".9" fill="none"/><path d="M813.2 339.9Q814.7 355.0 815.1 377.7" stroke="#151515" stroke-width=".9" fill="none"/><path d="M814.0 331.7Q817.4 350.1 818.3 377.7" stroke="#181818" stroke-width=".9" fill="none"/><path d="M814.4 330.9Q818.5 349.6 819.6 377.7" stroke="#131313" stroke-width=".9" fill="none"/><path d="M815.4 333.4Q822.1 351.1 823.8 377.7" stroke="#151515" stroke-width=".9" fill="none"/><path d="M817.0 334.3Q827.6 351.6 830.2 377.7" stroke="#151515" stroke-width=".9" fill="none"/><path d="M817.7 338.9Q829.7 354.4 832.7 377.7" stroke="#151515" stroke-width=".9" fill="none"/><path d="M806.1 347.0l-0.9 5.9" stroke="#484848" stroke-width="1" opacity=".8"/><path d="M810.2 334.4l-0.3 5.8" stroke="#484848" stroke-width="1" opacity=".8"/><path d="M807.8 338.5l1.0 4.8" stroke="#484848" stroke-width="1" opacity=".8"/><path d="M814.6 343.5l-1.3 4.1" stroke="#484848" stroke-width="1" opacity=".8"/></g><path d="M787.5 355.5q-0.6 1.9 -0.1 3.7M786.9 355.5q0.9 1.3 1.3 2.6M789.1 365.4q0.1 1.5 -0.2 3.0M789.2 365.4q-0.1 2.1 0.6 4.1M792.2 371.6q-0.8 2.2 -0.8 4.4M793.2 371.6q0.0 1.6 1.2 3.2M797.3 374.7q0.2 1.6 0.8 3.2M797.8 374.7q-0.1 1.4 1.4 2.7M804.4 372.8q-0.3 1.6 -1.1 3.3M804.8 372.8q-0.8 1.9 0.6 3.8M811.7 374.0q0.3 2.0 0.7 4.0M811.7 374.0q0.4 1.6 -1.3 3.2M821.9 373.5q-0.9 2.2 0.7 4.3M820.6 373.5q0.3 1.3 -1.1 2.6M831.3 371.6q0.6 1.8 -0.5 3.6M827.4 371.6q0.1 2.2 -1.1 4.5M834.6 360.4q-0.7 1.5 -0.4 3.0M830.4 360.4q-0.7 1.5 1.3 3.1" stroke="#121212" stroke-width=".9" fill="none"/><path d="M823 340l1 5M826 341l1 5" stroke="#555" stroke-width="1"/><clipPath id="hc9"><path d="M677.7 500.7C675.0 500.9 670.9 501.4 668.3 502.5C665.7 503.6 663.6 505.1 661.9 507.2C660.1 509.3 658.8 512.0 657.8 515.3C656.8 518.6 656.8 523.1 656.1 527.0C655.4 530.9 654.0 535.5 653.7 538.6C653.4 541.7 653.2 543.9 654.3 545.6C655.4 547.4 657.4 548.7 660.2 549.1C663.0 549.5 667.9 548.3 671.2 548.0C674.5 547.7 676.8 547.6 680.0 547.4C683.2 547.2 688.1 548.3 690.5 546.8C692.9 545.3 693.9 542.9 694.6 538.6C695.3 534.3 694.8 525.8 694.6 521.2C694.4 516.6 694.3 513.9 693.4 511.2C692.5 508.5 690.8 506.4 689.3 504.8C687.8 503.2 686.6 502.0 684.7 501.3C682.8 500.6 680.4 500.5 677.7 500.7Z"/></clipPath><path d="M677.7 500.7C675.0 500.9 670.9 501.4 668.3 502.5C665.7 503.6 663.6 505.1 661.9 507.2C660.1 509.3 658.8 512.0 657.8 515.3C656.8 518.6 656.8 523.1 656.1 527.0C655.4 530.9 654.0 535.5 653.7 538.6C653.4 541.7 653.2 543.9 654.3 545.6C655.4 547.4 657.4 548.7 660.2 549.1C663.0 549.5 667.9 548.3 671.2 548.0C674.5 547.7 676.8 547.6 680.0 547.4C683.2 547.2 688.1 548.3 690.5 546.8C692.9 545.3 693.9 542.9 694.6 538.6C695.3 534.3 694.8 525.8 694.6 521.2C694.4 516.6 694.3 513.9 693.4 511.2C692.5 508.5 690.8 506.4 689.3 504.8C687.8 503.2 686.6 502.0 684.7 501.3C682.8 500.6 680.4 500.5 677.7 500.7Z" fill="#0c0c0c" stroke="#121212" stroke-width="1"/><g clip-path="url(#hc9)"><path d="M669.1 504.8Q657.7 523.3 654.9 551.1" stroke="#131313" stroke-width=".9" fill="none"/><path d="M669.9 508.7Q660.5 525.7 658.2 551.1" stroke="#131313" stroke-width=".9" fill="none"/><path d="M670.8 514.5Q663.4 529.1 661.6 551.1" stroke="#131313" stroke-width=".9" fill="none"/><path d="M672.0 505.2Q667.6 523.5 666.5 551.1" stroke="#181818" stroke-width=".9" fill="none"/><path d="M673.1 508.2Q671.3 525.4 670.8 551.1" stroke="#151515" stroke-width=".9" fill="none"/><path d="M673.2 504.5Q671.8 523.1 671.4 551.1" stroke="#131313" stroke-width=".9" fill="none"/><path d="M674.6 507.8Q676.5 525.1 677.0 551.1" stroke="#131313" stroke-width=".9" fill="none"/><path d="M675.6 505.6Q679.9 523.8 680.9 551.1" stroke="#151515" stroke-width=".9" fill="none"/><path d="M676.3 508.2Q682.1 525.4 683.6 551.1" stroke="#131313" stroke-width=".9" fill="none"/><path d="M677.2 514.1Q685.2 528.9 687.2 551.1" stroke="#181818" stroke-width=".9" fill="none"/><path d="M677.5 512.9Q686.4 528.2 688.6 551.1" stroke="#151515" stroke-width=".9" fill="none"/><path d="M678.8 503.2Q690.7 522.4 693.7 551.1" stroke="#181818" stroke-width=".9" fill="none"/><path d="M667.0 511.6l-0.0 3.1" stroke="#484848" stroke-width="1" opacity=".8"/><path d="M673.8 518.8l-1.2 4.8" stroke="#484848" stroke-width="1" opacity=".8"/><path d="M668.2 514.4l1.2 3.6" stroke="#484848" stroke-width="1" opacity=".8"/></g><path d="M651.2 537.6q0.1 1.1 -1.4 2.2M651.6 537.6q0.8 1.6 -0.2 3.2M653.8 544.6q-0.8 1.8 0.2 3.6M652.7 544.6q0.9 1.8 -1.3 3.5M660.5 548.1q-0.7 1.8 -0.7 3.5M662.7 548.1q-0.8 2.2 0.6 4.5M673.5 547.0q0.2 1.3 -1.4 2.6M670.5 547.0q0.2 1.8 0.8 3.7M677.9 546.4q0.7 1.4 0.3 2.9M679.8 546.4q1.0 1.5 0.2 3.0M688.1 545.8q-0.3 2.0 -0.2 4.0M689.1 545.8q-0.4 1.6 -1.2 3.1M695.2 537.6q0.6 1.1 -1.4 2.3M696.0 537.6q-0.0 2.0 0.6 4.0" stroke="#121212" stroke-width=".9" fill="none"/><clipPath id="hc10"><path d="M808.6 488.2C805.5 488.0 800.6 488.0 797.1 488.8C793.6 489.6 790.0 490.9 787.5 493.1C785.0 495.3 783.1 499.1 782.0 502.1C780.9 505.1 780.6 508.3 780.8 511.1C781.0 513.9 782.1 517.3 783.3 519.0C784.5 520.7 786.1 521.2 788.1 521.4C790.1 521.6 792.8 520.0 795.3 520.2C797.8 520.4 800.5 522.6 803.1 522.6C805.7 522.6 808.3 521.6 811.0 520.2C813.7 518.8 817.2 515.9 819.4 514.1C821.6 512.3 823.2 511.1 824.2 509.3C825.2 507.5 825.8 505.5 825.4 503.3C825.0 501.1 823.4 498.3 821.8 496.1C820.2 493.9 818.0 491.3 815.8 490.0C813.6 488.7 811.7 488.4 808.6 488.2Z"/></clipPath><path d="M808.6 488.2C805.5 488.0 800.6 488.0 797.1 488.8C793.6 489.6 790.0 490.9 787.5 493.1C785.0 495.3 783.1 499.1 782.0 502.1C780.9 505.1 780.6 508.3 780.8 511.1C781.0 513.9 782.1 517.3 783.3 519.0C784.5 520.7 786.1 521.2 788.1 521.4C790.1 521.6 792.8 520.0 795.3 520.2C797.8 520.4 800.5 522.6 803.1 522.6C805.7 522.6 808.3 521.6 811.0 520.2C813.7 518.8 817.2 515.9 819.4 514.1C821.6 512.3 823.2 511.1 824.2 509.3C825.2 507.5 825.8 505.5 825.4 503.3C825.0 501.1 823.4 498.3 821.8 496.1C820.2 493.9 818.0 491.3 815.8 490.0C813.6 488.7 811.7 488.4 808.6 488.2Z" fill="#0c0c0c" stroke="#121212" stroke-width="1"/><g clip-path="url(#hc10)"><path d="M798.4 494.9Q785.6 506.8 782.4 524.6" stroke="#151515" stroke-width=".9" fill="none"/><path d="M799.4 494.1Q788.9 506.3 786.2 524.6" stroke="#161616" stroke-width=".9" fill="none"/><path d="M800.5 491.3Q792.7 504.6 790.7 524.6" stroke="#181818" stroke-width=".9" fill="none"/><path d="M801.1 492.1Q794.7 505.1 793.1 524.6" stroke="#161616" stroke-width=".9" fill="none"/><path d="M801.7 497.3Q796.9 508.2 795.7 524.6" stroke="#161616" stroke-width=".9" fill="none"/><path d="M803.0 492.4Q801.2 505.3 800.8 524.6" stroke="#161616" stroke-width=".9" fill="none"/><path d="M804.0 495.8Q804.6 507.3 804.8 524.6" stroke="#161616" stroke-width=".9" fill="none"/><path d="M804.6 496.5Q806.7 507.8 807.2 524.6" stroke="#151515" stroke-width=".9" fill="none"/><path d="M806.4 495.2Q812.7 507.0 814.3 524.6" stroke="#131313" stroke-width=".9" fill="none"/><path d="M806.9 491.9Q814.5 505.0 816.4 524.6" stroke="#151515" stroke-width=".9" fill="none"/><path d="M808.2 492.5Q818.9 505.4 821.6 524.6" stroke="#161616" stroke-width=".9" fill="none"/><path d="M809.0 492.0Q821.5 505.0 824.6 524.6" stroke="#181818" stroke-width=".9" fill="none"/><path d="M802.9 493.0l0.3 5.5" stroke="#484848" stroke-width="1" opacity=".8"/><path d="M797.3 494.5l-0.3 3.1" stroke="#484848" stroke-width="1" opacity=".8"/><path d="M804.1 500.2l0.5 4.6" stroke="#484848" stroke-width="1" opacity=".8"/><path d="M811.3 493.8l0.2 4.1" stroke="#484848" stroke-width="1" opacity=".8"/></g><path d="M781.3 510.1q0.6 1.1 -1.2 2.3M779.1 510.1q0.9 2.0 -0.2 4.0M782.9 518.0q-0.5 1.3 0.4 2.6M781.7 518.0q-0.1 1.1 -1.0 2.3M788.8 520.4q0.6 2.0 -0.1 4.1M787.3 520.4q-1.0 1.5 0.6 3.1M794.5 519.2q-0.8 1.4 -0.2 2.8M795.7 519.2q0.7 1.5 0.5 3.0M801.8 521.6q0.8 1.7 0.1 3.3M803.6 521.6q-0.0 1.1 -0.1 2.2M810.5 519.2q0.2 1.5 0.1 3.1M810.9 519.2q-0.1 1.2 1.4 2.4M819.0 513.1q-1.0 1.0 0.1 2.1M817.2 513.1q-0.8 1.1 -0.1 2.2M826.7 508.3q-0.1 1.6 -0.2 3.2M824.2 508.3q0.5 1.6 1.2 3.1" stroke="#121212" stroke-width=".9" fill="none"/><path d="M786 519q-3 6 0 12q2-5-1-9M812 517q8 4 11 13q-2-6-6-9" stroke="#121212" stroke-width="1.6" fill="none"/><clipPath id="hc11"><path d="M187.6 736.1C184.8 736.3 179.6 736.7 176.4 738.3C173.2 739.9 170.3 743.0 168.3 745.7C166.3 748.4 165.5 751.4 164.6 754.6C163.7 757.8 163.1 761.3 163.1 765.0C163.1 768.7 163.6 773.7 164.6 776.9C165.6 780.1 167.4 781.8 169.0 784.3C170.6 786.8 173.1 789.9 174.2 791.7C175.3 793.6 174.9 796.4 175.7 795.4C176.4 794.4 177.0 788.1 178.7 785.7C180.4 783.4 183.4 781.7 186.1 781.3C188.8 780.9 192.3 783.5 195.0 783.5C197.7 783.5 200.8 780.5 202.4 781.3C204.0 782.0 203.9 787.8 204.6 788.0C205.3 788.2 206.1 785.4 206.8 782.8C207.5 780.2 208.6 776.1 209.0 772.4C209.4 768.7 209.4 764.4 209.0 760.6C208.6 756.8 208.3 752.6 206.8 749.4C205.3 746.2 202.3 743.4 200.1 741.3C197.9 739.2 195.6 737.8 193.5 736.9C191.4 736.0 190.4 735.9 187.6 736.1Z"/></clipPath><path d="M187.6 736.1C184.8 736.3 179.6 736.7 176.4 738.3C173.2 739.9 170.3 743.0 168.3 745.7C166.3 748.4 165.5 751.4 164.6 754.6C163.7 757.8 163.1 761.3 163.1 765.0C163.1 768.7 163.6 773.7 164.6 776.9C165.6 780.1 167.4 781.8 169.0 784.3C170.6 786.8 173.1 789.9 174.2 791.7C175.3 793.6 174.9 796.4 175.7 795.4C176.4 794.4 177.0 788.1 178.7 785.7C180.4 783.4 183.4 781.7 186.1 781.3C188.8 780.9 192.3 783.5 195.0 783.5C197.7 783.5 200.8 780.5 202.4 781.3C204.0 782.0 203.9 787.8 204.6 788.0C205.3 788.2 206.1 785.4 206.8 782.8C207.5 780.2 208.6 776.1 209.0 772.4C209.4 768.7 209.4 764.4 209.0 760.6C208.6 756.8 208.3 752.6 206.8 749.4C205.3 746.2 202.3 743.4 200.1 741.3C197.9 739.2 195.6 737.8 193.5 736.9C191.4 736.0 190.4 735.9 187.6 736.1Z" fill="#0c0c0c" stroke="#121212" stroke-width="1"/><g clip-path="url(#hc11)"><path d="M180.5 752.8Q168.3 770.6 165.3 797.4" stroke="#181818" stroke-width=".9" fill="none"/><path d="M181.4 751.7Q171.2 770.0 168.6 797.4" stroke="#151515" stroke-width=".9" fill="none"/><path d="M182.1 746.7Q173.5 767.0 171.4 797.4" stroke="#151515" stroke-width=".9" fill="none"/><path d="M182.9 743.6Q176.5 765.1 174.9 797.4" stroke="#131313" stroke-width=".9" fill="none"/><path d="M184.3 752.3Q181.2 770.3 180.5 797.4" stroke="#131313" stroke-width=".9" fill="none"/><path d="M185.3 744.9Q184.7 765.9 184.5 797.4" stroke="#181818" stroke-width=".9" fill="none"/><path d="M186.4 748.2Q188.1 767.9 188.6 797.4" stroke="#151515" stroke-width=".9" fill="none"/><path d="M187.3 751.4Q191.3 769.8 192.3 797.4" stroke="#131313" stroke-width=".9" fill="none"/><path d="M187.7 741.9Q192.6 764.1 193.9 797.4" stroke="#151515" stroke-width=".9" fill="none"/><path d="M189.2 750.6Q197.7 769.3 199.8 797.4" stroke="#161616" stroke-width=".9" fill="none"/><path d="M190.0 751.6Q200.4 769.9 203.0 797.4" stroke="#151515" stroke-width=".9" fill="none"/><path d="M191.1 746.5Q204.3 766.8 207.6 797.4" stroke="#131313" stroke-width=".9" fill="none"/><path d="M186.3 747.8l1.5 6.0" stroke="#484848" stroke-width="1" opacity=".8"/><path d="M194.2 755.0l-0.6 3.7" stroke="#484848" stroke-width="1" opacity=".8"/><path d="M182.8 744.4l0.8 4.2" stroke="#484848" stroke-width="1" opacity=".8"/><path d="M194.4 749.6l1.4 5.5" stroke="#484848" stroke-width="1" opacity=".8"/><path d="M176.9 746.7l1.2 4.4" stroke="#484848" stroke-width="1" opacity=".8"/></g><path d="M167.0 775.9q-0.9 1.5 0.4 3.0M166.0 775.9q-0.8 1.3 -0.5 2.7M171.3 783.3q-0.8 1.9 -0.8 3.9M167.0 783.3q0.6 1.1 -1.0 2.1M174.5 790.7q-0.6 1.6 0.7 3.1M172.4 790.7q-0.8 1.8 -0.2 3.6M174.3 794.4q0.9 1.3 0.9 2.7M174.7 794.4q-0.6 2.1 -0.3 4.2M180.5 784.7q-0.8 1.8 1.5 3.6M177.3 784.7q0.5 1.3 -0.5 2.6M185.1 780.3q-0.8 1.1 0.2 2.2M184.8 780.3q-0.3 1.8 -0.1 3.5M197.3 782.5q0.1 1.6 1.1 3.2M193.4 782.5q0.8 1.2 1.0 2.4M201.1 780.3q0.5 1.2 1.3 2.5M200.9 780.3q0.8 2.2 0.3 4.4M204.2 787.0q-0.9 1.1 1.4 2.3M203.3 787.0q-0.5 1.9 1.0 3.8M207.3 781.8q-0.6 1.4 0.7 2.7M204.6 781.8q0.1 1.3 1.1 2.6M209.6 771.4q0.8 1.4 -0.9 2.7M206.6 771.4q-0.1 1.3 -1.3 2.7" stroke="#121212" stroke-width=".9" fill="none"/><clipPath id="hc12"><path d="M371.4 701.4C368.4 701.7 362.9 702.5 359.6 703.8C356.3 705.1 353.7 706.9 351.7 709.3C349.7 711.7 348.6 713.7 347.7 718.0C346.8 722.3 346.8 729.4 346.2 735.3C345.6 741.2 344.6 748.8 343.8 753.4C343.0 758.0 339.7 761.4 341.4 762.9C343.1 764.4 351.6 761.0 354.0 762.1C356.4 763.2 353.6 769.1 355.6 769.2C357.6 769.3 364.2 765.4 365.9 762.9C367.6 760.4 363.7 755.7 365.9 754.2C368.1 752.8 375.4 753.8 379.2 754.2C383.0 754.6 386.8 755.4 388.7 756.6C390.6 757.8 388.7 760.9 390.3 761.3C391.9 761.7 397.5 761.3 398.1 758.9C398.8 756.5 395.4 751.7 394.2 747.1C393.0 742.5 391.9 736.6 391.0 731.4C390.1 726.1 389.9 719.7 388.7 715.6C387.5 711.5 385.8 709.2 384.0 707.0C382.2 704.8 379.8 703.1 377.7 702.2C375.6 701.3 374.4 701.1 371.4 701.4Z"/></clipPath><path d="M371.4 701.4C368.4 701.7 362.9 702.5 359.6 703.8C356.3 705.1 353.7 706.9 351.7 709.3C349.7 711.7 348.6 713.7 347.7 718.0C346.8 722.3 346.8 729.4 346.2 735.3C345.6 741.2 344.6 748.8 343.8 753.4C343.0 758.0 339.7 761.4 341.4 762.9C343.1 764.4 351.6 761.0 354.0 762.1C356.4 763.2 353.6 769.1 355.6 769.2C357.6 769.3 364.2 765.4 365.9 762.9C367.6 760.4 363.7 755.7 365.9 754.2C368.1 752.8 375.4 753.8 379.2 754.2C383.0 754.6 386.8 755.4 388.7 756.6C390.6 757.8 388.7 760.9 390.3 761.3C391.9 761.7 397.5 761.3 398.1 758.9C398.8 756.5 395.4 751.7 394.2 747.1C393.0 742.5 391.9 736.6 391.0 731.4C390.1 726.1 389.9 719.7 388.7 715.6C387.5 711.5 385.8 709.2 384.0 707.0C382.2 704.8 379.8 703.1 377.7 702.2C375.6 701.3 374.4 701.1 371.4 701.4Z" fill="#0c0c0c" stroke="#121212" stroke-width="1"/><g clip-path="url(#hc12)"><path d="M363.2 716.1Q348.2 738.1 344.4 771.2" stroke="#151515" stroke-width=".9" fill="none"/><path d="M364.1 721.7Q351.2 741.5 348.0 771.2" stroke="#181818" stroke-width=".9" fill="none"/><path d="M365.2 718.5Q354.9 739.6 352.3 771.2" stroke="#151515" stroke-width=".9" fill="none"/><path d="M366.6 716.0Q359.9 738.1 358.2 771.2" stroke="#151515" stroke-width=".9" fill="none"/><path d="M368.2 711.0Q365.3 735.1 364.6 771.2" stroke="#161616" stroke-width=".9" fill="none"/><path d="M369.3 705.8Q369.1 732.0 369.0 771.2" stroke="#151515" stroke-width=".9" fill="none"/><path d="M369.7 716.4Q370.3 738.3 370.4 771.2" stroke="#161616" stroke-width=".9" fill="none"/><path d="M371.5 718.3Q376.3 739.5 377.6 771.2" stroke="#131313" stroke-width=".9" fill="none"/><path d="M372.0 705.8Q378.1 732.0 379.6 771.2" stroke="#151515" stroke-width=".9" fill="none"/><path d="M373.3 721.5Q382.4 741.4 384.7 771.2" stroke="#181818" stroke-width=".9" fill="none"/><path d="M374.5 712.0Q386.5 735.7 389.5 771.2" stroke="#151515" stroke-width=".9" fill="none"/><path d="M376.1 719.7Q391.9 740.3 395.9 771.2" stroke="#151515" stroke-width=".9" fill="none"/><path d="M383.3 726.3l0.2 4.5" stroke="#484848" stroke-width="1" opacity=".8"/><path d="M360.5 721.1l0.5 4.4" stroke="#484848" stroke-width="1" opacity=".8"/><path d="M374.0 719.8l0.4 3.2" stroke="#484848" stroke-width="1" opacity=".8"/></g><path d="M342.3 752.4q-0.5 2.0 1.3 4.0M345.6 752.4q-0.4 1.5 -0.7 3.0M340.6 761.9q0.1 1.5 0.8 2.9M339.8 761.9q0.7 1.5 -1.4 3.0M351.6 761.1q-0.9 1.8 -0.9 3.7M354.5 761.1q-0.6 1.9 -1.3 3.9M354.5 768.2q-0.0 1.5 0.3 3.1M356.7 768.2q-0.3 1.6 -0.5 3.3M365.7 761.9q0.7 1.9 -0.8 3.7M368.3 761.9q0.1 1.6 -1.0 3.2M367.2 753.2q0.2 1.3 1.3 2.5M368.0 753.2q-0.6 2.0 0.9 4.0M379.2 753.2q-0.8 1.3 -0.4 2.6M379.4 753.2q0.9 1.2 1.1 2.4M389.5 755.6q-0.8 1.3 0.9 2.7M388.7 755.6q-0.3 1.6 0.6 3.2M390.0 760.3q-0.1 1.9 0.4 3.8M388.0 760.3q0.7 1.4 0.4 2.8M397.8 757.9q0.5 2.0 0.1 4.0M395.7 757.9q-0.9 1.0 0.2 2.0M393.0 746.1q-0.6 1.2 -0.1 2.3M392.0 746.1q0.4 1.7 1.3 3.4" stroke="#121212" stroke-width=".9" fill="none"/><clipPath id="hc13"><path d="M524.8 669.0C523.4 669.8 521.0 672.4 520.6 673.9C520.2 675.4 523.3 676.5 522.7 678.0C522.1 679.5 518.7 680.7 517.1 682.9C515.5 685.1 514.0 688.2 513.0 691.3C512.0 694.4 511.7 698.1 510.9 701.7C510.1 705.3 508.1 709.8 508.1 712.8C508.1 715.8 509.3 717.7 510.9 719.7C512.5 721.7 515.5 723.6 517.8 724.6C520.1 725.6 522.5 726.0 524.8 726.0C527.1 726.0 528.8 725.3 531.7 724.6C534.6 723.9 539.1 723.5 542.1 721.8C545.1 720.1 548.5 717.6 549.8 714.2C551.1 710.9 550.1 705.5 549.8 701.7C549.4 697.9 549.0 694.4 547.7 691.3C546.4 688.2 544.5 685.1 542.1 682.9C539.7 680.7 534.7 679.7 533.1 678.0C531.5 676.3 533.1 674.0 532.4 672.5C531.7 671.0 530.3 669.6 529.0 669.0C527.7 668.4 526.2 668.2 524.8 669.0Z"/></clipPath><path d="M524.8 669.0C523.4 669.8 521.0 672.4 520.6 673.9C520.2 675.4 523.3 676.5 522.7 678.0C522.1 679.5 518.7 680.7 517.1 682.9C515.5 685.1 514.0 688.2 513.0 691.3C512.0 694.4 511.7 698.1 510.9 701.7C510.1 705.3 508.1 709.8 508.1 712.8C508.1 715.8 509.3 717.7 510.9 719.7C512.5 721.7 515.5 723.6 517.8 724.6C520.1 725.6 522.5 726.0 524.8 726.0C527.1 726.0 528.8 725.3 531.7 724.6C534.6 723.9 539.1 723.5 542.1 721.8C545.1 720.1 548.5 717.6 549.8 714.2C551.1 710.9 550.1 705.5 549.8 701.7C549.4 697.9 549.0 694.4 547.7 691.3C546.4 688.2 544.5 685.1 542.1 682.9C539.7 680.7 534.7 679.7 533.1 678.0C531.5 676.3 533.1 674.0 532.4 672.5C531.7 671.0 530.3 669.6 529.0 669.0C527.7 668.4 526.2 668.2 524.8 669.0Z" fill="#0c0c0c" stroke="#121212" stroke-width="1"/><g clip-path="url(#hc13)"><path d="M522.8 681.6Q513.0 700.2 510.6 728.0" stroke="#151515" stroke-width=".9" fill="none"/><path d="M523.7 681.3Q515.9 700.0 513.9 728.0" stroke="#151515" stroke-width=".9" fill="none"/><path d="M524.5 674.5Q518.8 695.9 517.4 728.0" stroke="#131313" stroke-width=".9" fill="none"/><path d="M525.3 674.9Q521.4 696.1 520.4 728.0" stroke="#161616" stroke-width=".9" fill="none"/><path d="M525.7 673.6Q522.6 695.4 521.9 728.0" stroke="#131313" stroke-width=".9" fill="none"/><path d="M527.5 683.7Q528.8 701.4 529.2 728.0" stroke="#131313" stroke-width=".9" fill="none"/><path d="M528.2 683.4Q531.4 701.2 532.2 728.0" stroke="#161616" stroke-width=".9" fill="none"/><path d="M529.1 682.5Q534.2 700.7 535.5 728.0" stroke="#151515" stroke-width=".9" fill="none"/><path d="M529.9 675.5Q537.0 696.5 538.8 728.0" stroke="#151515" stroke-width=".9" fill="none"/><path d="M530.5 682.6Q538.9 700.8 541.1 728.0" stroke="#181818" stroke-width=".9" fill="none"/><path d="M531.5 684.5Q542.5 701.9 545.3 728.0" stroke="#161616" stroke-width=".9" fill="none"/><path d="M532.4 676.8Q545.4 697.3 548.7 728.0" stroke="#161616" stroke-width=".9" fill="none"/><path d="M533.6 684.7l0.7 3.4" stroke="#484848" stroke-width="1" opacity=".8"/><path d="M533.3 682.9l-1.0 3.6" stroke="#484848" stroke-width="1" opacity=".8"/><path d="M530.4 679.9l-0.1 4.8" stroke="#484848" stroke-width="1" opacity=".8"/><path d="M528.0 677.9l-0.0 3.7" stroke="#484848" stroke-width="1" opacity=".8"/></g><path d="M509.6 700.7q-0.3 1.2 -1.3 2.5M511.7 700.7q-0.2 2.2 0.7 4.4M510.3 711.8q-0.7 1.1 0.9 2.1M509.8 711.8q-0.7 1.8 -0.3 3.6M512.7 718.7q0.6 2.1 -0.9 4.2M512.7 718.7q0.4 1.5 -1.1 2.9M520.2 723.6q0.4 1.8 -0.9 3.5M518.4 723.6q0.2 1.7 -0.4 3.5M525.9 725.0q-0.4 1.4 -1.0 2.9M525.7 725.0q-0.5 1.1 -1.3 2.3M532.4 723.6q0.1 1.7 -1.4 3.4M531.4 723.6q-0.8 1.4 -1.5 2.9M544.6 720.8q-0.4 1.2 -0.7 2.3M542.6 720.8q-0.1 1.1 -0.4 2.2M551.5 713.2q-0.3 1.0 -0.0 2.0M552.1 713.2q-0.1 1.6 0.5 3.3M548.8 700.7q0.0 1.0 1.2 2.1M551.0 700.7q0.4 1.3 1.0 2.6" stroke="#121212" stroke-width=".9" fill="none"/><path d="M524 718q4-4 9 1l-2 6h-6z" fill="#3a3a3a"/><clipPath id="hc14"><path d="M658.8 645.7C657.2 646.0 654.3 647.0 653.0 648.3C651.7 649.6 651.1 651.2 651.0 653.5C650.9 655.8 652.5 659.2 652.3 661.9C652.1 664.6 649.8 666.7 649.7 669.7C649.6 672.7 650.8 677.3 651.7 680.1C652.6 682.9 653.9 684.2 654.9 686.6C655.9 689.0 656.4 692.8 657.5 694.3C658.6 695.8 659.2 695.3 661.4 695.6C663.6 695.9 668.0 697.9 670.5 696.3C673.0 694.7 674.4 686.5 676.3 685.9C678.2 685.2 681.0 693.1 682.1 692.4C683.2 691.6 681.8 684.0 682.8 681.4C683.8 678.8 687.0 678.8 688.0 676.8C689.0 674.8 689.0 672.0 688.6 669.7C688.2 667.4 687.0 665.5 685.4 663.2C683.8 660.9 681.6 658.2 678.9 656.1C676.2 654.0 671.9 651.9 669.2 650.3C666.5 648.7 664.4 647.2 662.7 646.4C661.0 645.6 660.4 645.4 658.8 645.7Z"/></clipPath><path d="M658.8 645.7C657.2 646.0 654.3 647.0 653.0 648.3C651.7 649.6 651.1 651.2 651.0 653.5C650.9 655.8 652.5 659.2 652.3 661.9C652.1 664.6 649.8 666.7 649.7 669.7C649.6 672.7 650.8 677.3 651.7 680.1C652.6 682.9 653.9 684.2 654.9 686.6C655.9 689.0 656.4 692.8 657.5 694.3C658.6 695.8 659.2 695.3 661.4 695.6C663.6 695.9 668.0 697.9 670.5 696.3C673.0 694.7 674.4 686.5 676.3 685.9C678.2 685.2 681.0 693.1 682.1 692.4C683.2 691.6 681.8 684.0 682.8 681.4C683.8 678.8 687.0 678.8 688.0 676.8C689.0 674.8 689.0 672.0 688.6 669.7C688.2 667.4 687.0 665.5 685.4 663.2C683.8 660.9 681.6 658.2 678.9 656.1C676.2 654.0 671.9 651.9 669.2 650.3C666.5 648.7 664.4 647.2 662.7 646.4C661.0 645.6 660.4 645.4 658.8 645.7Z" fill="#0c0c0c" stroke="#121212" stroke-width="1"/><g clip-path="url(#hc14)"><path d="M662.6 656.5Q654.2 673.2 652.1 698.3" stroke="#151515" stroke-width=".9" fill="none"/><path d="M663.0 651.5Q655.5 670.2 653.6 698.3" stroke="#131313" stroke-width=".9" fill="none"/><path d="M664.2 652.1Q659.6 670.6 658.4 698.3" stroke="#181818" stroke-width=".9" fill="none"/><path d="M664.7 659.7Q661.4 675.2 660.6 698.3" stroke="#161616" stroke-width=".9" fill="none"/><path d="M665.4 659.6Q663.6 675.1 663.2 698.3" stroke="#161616" stroke-width=".9" fill="none"/><path d="M666.8 652.8Q668.4 671.0 668.8 698.3" stroke="#151515" stroke-width=".9" fill="none"/><path d="M666.9 656.6Q668.9 673.3 669.4 698.3" stroke="#161616" stroke-width=".9" fill="none"/><path d="M667.7 656.5Q671.7 673.2 672.7 698.3" stroke="#131313" stroke-width=".9" fill="none"/><path d="M669.0 648.6Q675.9 668.5 677.6 698.3" stroke="#161616" stroke-width=".9" fill="none"/><path d="M669.4 660.6Q677.3 675.7 679.3 698.3" stroke="#181818" stroke-width=".9" fill="none"/><path d="M670.6 660.0Q681.4 675.3 684.1 698.3" stroke="#131313" stroke-width=".9" fill="none"/><path d="M671.7 656.9Q685.1 673.5 688.5 698.3" stroke="#131313" stroke-width=".9" fill="none"/><path d="M671.5 660.8l-0.4 5.6" stroke="#484848" stroke-width="1" opacity=".8"/><path d="M674.4 658.7l0.5 3.8" stroke="#484848" stroke-width="1" opacity=".8"/><path d="M672.3 658.6l-0.7 3.8" stroke="#484848" stroke-width="1" opacity=".8"/></g><path d="M649.8 679.1q-0.4 2.2 -1.1 4.5M650.0 679.1q0.4 1.5 0.3 3.0M654.5 685.6q-0.7 2.2 -0.3 4.4M653.9 685.6q-0.2 1.6 1.0 3.1M656.3 693.3q-0.1 1.5 0.3 3.0M657.4 693.3q-0.0 1.7 -0.7 3.4M661.1 694.6q-0.2 2.0 1.5 4.1M659.0 694.6q-0.3 1.9 -0.1 3.8M669.8 695.3q-0.9 1.7 0.2 3.3M672.0 695.3q-0.8 1.1 -0.9 2.2M673.9 684.9q0.0 1.0 0.1 2.0M677.8 684.9q-0.8 2.2 1.4 4.5M683.5 691.4q-0.5 1.0 0.0 2.0M680.5 691.4q0.4 1.3 -0.5 2.5M683.9 680.4q-0.9 2.1 1.3 4.2M684.0 680.4q-0.7 2.0 0.4 4.0M686.5 675.8q-0.5 1.6 -0.3 3.2M688.3 675.8q-0.0 2.1 1.4 4.3" stroke="#121212" stroke-width=".9" fill="none"/><clipPath id="hc15"><path d="M788.4 630.2C785.8 630.3 783.8 631.2 781.8 632.2C779.8 633.2 778.2 634.5 776.7 636.3C775.2 638.1 773.8 640.5 773.1 642.9C772.4 645.3 772.1 648.5 772.6 650.5C773.1 652.5 774.5 653.6 776.2 654.6C777.9 655.6 780.8 655.9 782.8 656.7C784.8 657.5 786.6 659.4 788.4 659.2C790.2 659.0 791.5 656.4 793.5 655.6C795.5 654.8 798.6 654.9 800.6 654.6C802.6 654.4 804.3 655.1 805.7 654.1C807.1 653.1 808.3 650.4 808.8 648.5C809.3 646.6 809.5 644.9 808.8 642.9C808.1 640.9 806.6 638.2 804.7 636.3C802.8 634.4 800.3 632.7 797.6 631.7C794.9 630.7 791.0 630.1 788.4 630.2Z"/></clipPath><path d="M788.4 630.2C785.8 630.3 783.8 631.2 781.8 632.2C779.8 633.2 778.2 634.5 776.7 636.3C775.2 638.1 773.8 640.5 773.1 642.9C772.4 645.3 772.1 648.5 772.6 650.5C773.1 652.5 774.5 653.6 776.2 654.6C777.9 655.6 780.8 655.9 782.8 656.7C784.8 657.5 786.6 659.4 788.4 659.2C790.2 659.0 791.5 656.4 793.5 655.6C795.5 654.8 798.6 654.9 800.6 654.6C802.6 654.4 804.3 655.1 805.7 654.1C807.1 653.1 808.3 650.4 808.8 648.5C809.3 646.6 809.5 644.9 808.8 642.9C808.1 640.9 806.6 638.2 804.7 636.3C802.8 634.4 800.3 632.7 797.6 631.7C794.9 630.7 791.0 630.1 788.4 630.2Z" fill="#0c0c0c" stroke="#121212" stroke-width="1"/><g clip-path="url(#hc15)"><path d="M788.6 637.0Q775.4 646.7 772.2 661.2" stroke="#151515" stroke-width=".9" fill="none"/><path d="M790.2 633.4Q781.1 644.5 778.8 661.2" stroke="#131313" stroke-width=".9" fill="none"/><path d="M791.0 636.6Q783.5 646.4 781.7 661.2" stroke="#161616" stroke-width=".9" fill="none"/><path d="M791.1 634.1Q783.9 644.9 782.1 661.2" stroke="#161616" stroke-width=".9" fill="none"/><path d="M791.9 633.6Q786.6 644.6 785.3 661.2" stroke="#151515" stroke-width=".9" fill="none"/><path d="M793.3 633.1Q791.4 644.4 790.9 661.2" stroke="#161616" stroke-width=".9" fill="none"/><path d="M793.9 633.3Q793.5 644.4 793.4 661.2" stroke="#181818" stroke-width=".9" fill="none"/><path d="M794.1 635.0Q794.1 645.5 794.2 661.2" stroke="#181818" stroke-width=".9" fill="none"/><path d="M795.1 635.0Q797.6 645.5 798.2 661.2" stroke="#161616" stroke-width=".9" fill="none"/><path d="M795.8 633.9Q800.0 644.8 801.0 661.2" stroke="#181818" stroke-width=".9" fill="none"/><path d="M796.5 637.9Q802.4 647.2 803.9 661.2" stroke="#131313" stroke-width=".9" fill="none"/><path d="M797.4 638.5Q805.3 647.6 807.3 661.2" stroke="#131313" stroke-width=".9" fill="none"/><path d="M786.6 638.0l0.3 5.4" stroke="#484848" stroke-width="1" opacity=".8"/><path d="M797.2 633.8l0.1 3.5" stroke="#484848" stroke-width="1" opacity=".8"/></g><path d="M774.4 649.5q-0.2 2.1 -1.3 4.2M773.7 649.5q-0.4 2.2 1.3 4.3M774.9 653.6q0.0 1.7 -1.3 3.4M775.3 653.6q0.3 1.2 -0.3 2.4M782.7 655.7q0.6 2.1 0.8 4.2M784.5 655.7q-0.7 1.3 0.5 2.7M787.8 658.2q-0.5 1.0 1.4 2.0M786.4 658.2q-0.1 1.1 -1.3 2.2M792.3 654.6q0.1 2.0 1.1 4.1M793.5 654.6q-0.1 1.6 -1.3 3.3M802.9 653.6q0.5 1.3 -0.2 2.6M801.7 653.6q0.2 1.8 -1.3 3.7M807.0 653.1q-0.1 2.0 -1.3 4.1M807.9 653.1q-0.1 1.4 0.1 2.8M806.5 647.5q0.7 1.5 -0.3 3.1M810.8 647.5q0.2 2.1 1.2 4.3" stroke="#121212" stroke-width=".9" fill="none"/><path d="M138.1 618.1L280.1 872.0" stroke="#555555" stroke-width="1"/><path d="M138.1 618.1L595.9 563.9" stroke="#555555" stroke-width="1"/><path d="M177.8 613.4L347.2 856.2" stroke="#555555" stroke-width="1"/><path d="M143.9 628.4L612.8 570.8" stroke="#555555" stroke-width="1"/><path d="M216.1 608.9L410.4 841.2" stroke="#555555" stroke-width="1"/><path d="M150.0 639.4L630.7 578.0" stroke="#555555" stroke-width="1"/><path d="M253.3 604.5L470.2 827.1" stroke="#555555" stroke-width="1"/><path d="M156.6 651.2L649.6 585.6" stroke="#555555" stroke-width="1"/><path d="M289.2 600.2L526.7 813.7" stroke="#555555" stroke-width="1"/><path d="M163.7 663.8L669.5 593.7" stroke="#555555" stroke-width="1"/><path d="M324.1 596.1L580.2 801.0" stroke="#555555" stroke-width="1"/><path d="M171.3 677.4L690.7 602.3" stroke="#555555" stroke-width="1"/><path d="M358.0 592.1L631.1 789.0" stroke="#555555" stroke-width="1"/><path d="M179.5 692.1L713.2 611.4" stroke="#555555" stroke-width="1"/><path d="M390.8 588.2L679.4 777.6" stroke="#121212" stroke-width="1.3"/><path d="M188.5 708.1L737.2 621.0" stroke="#121212" stroke-width="1.3"/><path d="M422.7 584.4L725.3 766.7" stroke="#555555" stroke-width="1"/><path d="M198.1 725.4L762.7 631.4" stroke="#555555" stroke-width="1"/><path d="M453.6 580.7L769.1 756.3" stroke="#555555" stroke-width="1"/><path d="M208.7 744.3L789.9 642.4" stroke="#555555" stroke-width="1"/><path d="M483.7 577.2L810.8 746.5" stroke="#555555" stroke-width="1"/><path d="M220.3 765.0L819.1 654.2" stroke="#555555" stroke-width="1"/><path d="M512.9 573.7L850.6 737.0" stroke="#555555" stroke-width="1"/><path d="M233.0 787.7L850.5 666.9" stroke="#555555" stroke-width="1"/><path d="M541.3 570.4L888.7 728.0" stroke="#555555" stroke-width="1"/><path d="M247.0 812.9L884.2 680.5" stroke="#555555" stroke-width="1"/><path d="M569.0 567.1L925.1 719.4" stroke="#555555" stroke-width="1"/><path d="M262.7 840.8L920.6 695.2" stroke="#555555" stroke-width="1"/><path d="M595.9 563.9L960.0 711.2" stroke="#555555" stroke-width="1"/><path d="M280.1 872.0L960.0 711.2" stroke="#555555" stroke-width="1"/><clipPath id="hc6"><path d="M172.0 544.7C167.9 544.7 162.7 546.0 159.3 547.6C155.9 549.2 153.3 551.7 151.5 554.5C149.7 557.3 148.9 560.6 148.6 564.2C148.3 567.8 148.8 572.7 149.6 575.9C150.4 579.1 153.2 580.7 153.5 583.6C153.8 586.5 152.2 590.1 151.5 593.4C150.8 596.6 149.4 599.9 149.6 603.1C149.8 606.3 150.7 609.9 152.5 612.8C154.3 615.7 157.9 618.2 160.3 620.6C162.7 623.0 165.0 625.5 167.1 627.4C169.2 629.3 170.9 632.5 172.9 632.3C174.9 632.1 176.5 628.7 178.8 626.4C181.1 624.1 184.7 621.6 186.6 618.7C188.5 615.8 189.9 612.3 190.4 608.9C190.9 605.5 190.3 601.4 189.5 598.2C188.7 595.0 185.4 592.4 185.6 589.5C185.8 586.6 188.9 584.3 190.4 580.7C191.9 577.1 194.1 572.4 194.3 568.0C194.5 563.6 193.2 557.9 191.4 554.5C189.6 551.1 186.8 549.2 183.6 547.6C180.4 546.0 176.1 544.7 172.0 544.7Z"/></clipPath><path d="M172.0 544.7C167.9 544.7 162.7 546.0 159.3 547.6C155.9 549.2 153.3 551.7 151.5 554.5C149.7 557.3 148.9 560.6 148.6 564.2C148.3 567.8 148.8 572.7 149.6 575.9C150.4 579.1 153.2 580.7 153.5 583.6C153.8 586.5 152.2 590.1 151.5 593.4C150.8 596.6 149.4 599.9 149.6 603.1C149.8 606.3 150.7 609.9 152.5 612.8C154.3 615.7 157.9 618.2 160.3 620.6C162.7 623.0 165.0 625.5 167.1 627.4C169.2 629.3 170.9 632.5 172.9 632.3C174.9 632.1 176.5 628.7 178.8 626.4C181.1 624.1 184.7 621.6 186.6 618.7C188.5 615.8 189.9 612.3 190.4 608.9C190.9 605.5 190.3 601.4 189.5 598.2C188.7 595.0 185.4 592.4 185.6 589.5C185.8 586.6 188.9 584.3 190.4 580.7C191.9 577.1 194.1 572.4 194.3 568.0C194.5 563.6 193.2 557.9 191.4 554.5C189.6 551.1 186.8 549.2 183.6 547.6C180.4 546.0 176.1 544.7 172.0 544.7Z" fill="#0c0c0c" stroke="#121212" stroke-width="1"/><g clip-path="url(#hc6)"><path d="M168.5 559.7Q155.1 589.5 151.8 634.3" stroke="#161616" stroke-width=".9" fill="none"/><path d="M168.7 552.3Q155.7 585.1 152.5 634.3" stroke="#181818" stroke-width=".9" fill="none"/><path d="M170.6 565.2Q162.1 592.8 160.0 634.3" stroke="#161616" stroke-width=".9" fill="none"/><path d="M171.4 555.1Q164.7 586.8 163.0 634.3" stroke="#151515" stroke-width=".9" fill="none"/><path d="M172.3 558.1Q167.8 588.6 166.7 634.3" stroke="#131313" stroke-width=".9" fill="none"/><path d="M172.7 561.2Q169.2 590.4 168.3 634.3" stroke="#161616" stroke-width=".9" fill="none"/><path d="M174.1 562.4Q174.0 591.2 174.0 634.3" stroke="#131313" stroke-width=".9" fill="none"/><path d="M175.2 556.4Q177.9 587.6 178.5 634.3" stroke="#131313" stroke-width=".9" fill="none"/><path d="M175.7 558.1Q179.5 588.6 180.4 634.3" stroke="#161616" stroke-width=".9" fill="none"/><path d="M176.7 551.1Q183.0 584.4 184.6 634.3" stroke="#151515" stroke-width=".9" fill="none"/><path d="M177.9 566.5Q187.1 593.6 189.4 634.3" stroke="#131313" stroke-width=".9" fill="none"/><path d="M179.1 562.0Q191.2 590.9 194.2 634.3" stroke="#151515" stroke-width=".9" fill="none"/><path d="M179.3 577.6l-0.0 5.5" stroke="#484848" stroke-width="1" opacity=".8"/><path d="M166.3 569.3l1.4 5.7" stroke="#484848" stroke-width="1" opacity=".8"/><path d="M172.7 577.7l0.4 3.7" stroke="#484848" stroke-width="1" opacity=".8"/><path d="M171.1 564.0l-1.1 4.5" stroke="#484848" stroke-width="1" opacity=".8"/><path d="M176.3 560.1l0.3 3.8" stroke="#484848" stroke-width="1" opacity=".8"/><path d="M177.1 564.5l-0.8 4.8" stroke="#484848" stroke-width="1" opacity=".8"/></g><path d="M153.2 592.4q0.0 2.1 -0.9 4.2M149.8 592.4q0.1 1.8 0.5 3.6M150.2 602.1q0.1 1.5 -0.6 2.9M150.5 602.1q-0.6 1.6 0.3 3.2M155.0 611.8q-0.1 1.1 0.9 2.2M150.4 611.8q0.7 1.8 -0.2 3.5M161.7 619.6q-0.8 1.5 -0.2 3.0M159.3 619.6q0.9 2.0 -0.9 4.0M168.0 626.4q0.4 1.6 1.4 3.1M164.7 626.4q-0.5 1.7 0.9 3.3M171.3 631.3q-0.3 1.6 0.1 3.3M175.3 631.3q-0.2 2.2 -0.0 4.3M179.3 625.4q-0.0 1.8 0.7 3.6M178.8 625.4q-0.1 1.8 -0.4 3.6M184.9 617.7q0.2 2.1 0.6 4.3M185.4 617.7q1.0 1.8 0.7 3.6M188.7 607.9q0.1 2.0 0.4 4.1M192.7 607.9q0.2 1.2 0.2 2.5M190.4 597.2q1.0 1.5 -0.0 2.9M189.9 597.2q-0.7 2.1 -0.7 4.3" stroke="#121212" stroke-width=".9" fill="none"/><path d="M193 566V598" stroke="#111" stroke-width="1.6"/><clipPath id="hc7"><path d="M357.5 520.3C355.8 520.7 353.8 523.2 352.5 525.3C351.2 527.4 351.1 530.1 350.0 532.8C348.9 535.4 346.6 537.7 345.8 541.2C345.0 544.7 344.9 550.0 345.0 553.7C345.1 557.5 346.3 560.7 346.7 563.7C347.1 566.8 347.1 568.7 347.5 572.0C347.9 575.3 348.9 580.5 349.2 583.7C349.5 586.9 348.2 589.4 349.2 591.2C350.2 593.0 352.9 594.6 355.0 594.5C357.1 594.4 359.5 591.8 361.7 590.3C363.9 588.8 367.2 587.2 368.3 585.3C369.4 583.4 366.9 580.6 368.3 578.7C369.7 576.8 374.8 575.9 376.7 573.7C378.6 571.5 378.6 565.9 380.0 565.3C381.4 564.7 383.9 572.5 385.0 570.3C386.1 568.1 386.7 557.1 386.7 552.0C386.7 546.9 385.8 542.8 385.0 539.5C384.2 536.2 383.8 534.1 381.7 532.0C379.6 529.9 375.7 528.5 372.5 527.0C369.3 525.5 365.0 523.9 362.5 522.8C360.0 521.7 359.2 519.9 357.5 520.3Z"/></clipPath><path d="M357.5 520.3C355.8 520.7 353.8 523.2 352.5 525.3C351.2 527.4 351.1 530.1 350.0 532.8C348.9 535.4 346.6 537.7 345.8 541.2C345.0 544.7 344.9 550.0 345.0 553.7C345.1 557.5 346.3 560.7 346.7 563.7C347.1 566.8 347.1 568.7 347.5 572.0C347.9 575.3 348.9 580.5 349.2 583.7C349.5 586.9 348.2 589.4 349.2 591.2C350.2 593.0 352.9 594.6 355.0 594.5C357.1 594.4 359.5 591.8 361.7 590.3C363.9 588.8 367.2 587.2 368.3 585.3C369.4 583.4 366.9 580.6 368.3 578.7C369.7 576.8 374.8 575.9 376.7 573.7C378.6 571.5 378.6 565.9 380.0 565.3C381.4 564.7 383.9 572.5 385.0 570.3C386.1 568.1 386.7 557.1 386.7 552.0C386.7 546.9 385.8 542.8 385.0 539.5C384.2 536.2 383.8 534.1 381.7 532.0C379.6 529.9 375.7 528.5 372.5 527.0C369.3 525.5 365.0 523.9 362.5 522.8C360.0 521.7 359.2 519.9 357.5 520.3Z" fill="#0c0c0c" stroke="#121212" stroke-width="1"/><g clip-path="url(#hc7)"><path d="M359.6 536.1Q348.2 560.3 345.3 596.5" stroke="#131313" stroke-width=".9" fill="none"/><path d="M361.2 525.8Q353.4 554.1 351.5 596.5" stroke="#131313" stroke-width=".9" fill="none"/><path d="M362.1 528.0Q356.7 555.4 355.3 596.5" stroke="#131313" stroke-width=".9" fill="none"/><path d="M362.5 525.3Q358.0 553.8 356.9 596.5" stroke="#131313" stroke-width=".9" fill="none"/><path d="M363.5 525.1Q361.4 553.7 360.8 596.5" stroke="#131313" stroke-width=".9" fill="none"/><path d="M364.8 535.7Q365.7 560.0 365.9 596.5" stroke="#131313" stroke-width=".9" fill="none"/><path d="M365.3 531.4Q367.4 557.4 367.9 596.5" stroke="#151515" stroke-width=".9" fill="none"/><path d="M365.6 539.9Q368.5 562.6 369.2 596.5" stroke="#161616" stroke-width=".9" fill="none"/><path d="M366.8 534.0Q372.7 559.0 374.2 596.5" stroke="#161616" stroke-width=".9" fill="none"/><path d="M367.8 536.7Q376.2 560.6 378.3 596.5" stroke="#131313" stroke-width=".9" fill="none"/><path d="M368.7 535.9Q379.2 560.1 381.8 596.5" stroke="#161616" stroke-width=".9" fill="none"/><path d="M369.1 537.2Q380.5 560.9 383.4 596.5" stroke="#131313" stroke-width=".9" fill="none"/><path d="M369.1 539.5l0.1 5.3" stroke="#484848" stroke-width="1" opacity=".8"/><path d="M366.2 548.4l-0.4 3.7" stroke="#484848" stroke-width="1" opacity=".8"/><path d="M360.9 545.4l-1.3 3.9" stroke="#484848" stroke-width="1" opacity=".8"/><path d="M366.8 536.3l-0.2 4.8" stroke="#484848" stroke-width="1" opacity=".8"/><path d="M358.9 539.8l-1.0 4.0" stroke="#484848" stroke-width="1" opacity=".8"/><path d="M375.0 538.0l1.4 3.2" stroke="#484848" stroke-width="1" opacity=".8"/></g><path d="M347.0 562.7q0.6 2.0 -0.5 4.0M346.0 562.7q0.6 1.6 -1.3 3.2M345.5 571.0q0.4 1.3 -1.3 2.7M348.7 571.0q0.2 1.4 0.5 2.8M348.9 582.7q0.8 1.9 -0.5 3.8M351.4 582.7q0.2 1.4 -0.0 2.9M347.8 590.2q0.5 1.4 -0.3 2.7M351.3 590.2q-0.7 1.6 -0.3 3.2M353.9 593.5q-0.1 1.2 0.2 2.3M356.0 593.5q0.4 2.2 -0.4 4.5M360.4 589.3q-0.7 1.1 0.5 2.2M359.3 589.3q-0.6 2.0 -0.7 4.1M366.5 584.3q0.2 1.7 -0.5 3.3M366.4 584.3q0.9 2.1 0.5 4.1M369.5 577.7q0.7 1.6 1.4 3.1M369.2 577.7q-0.2 1.7 -0.3 3.4M376.6 572.7q-0.6 1.5 1.5 3.0M376.4 572.7q0.2 1.1 -1.2 2.3M380.3 564.3q0.9 1.7 0.3 3.3M377.9 564.3q-0.2 1.3 0.4 2.5M387.3 569.3q-0.1 1.8 -1.2 3.5M384.9 569.3q-0.0 2.2 -0.6 4.4" stroke="#121212" stroke-width=".9" fill="none"/><clipPath id="hc8"><path d="M534.5 508.9C530.9 508.8 526.4 509.8 523.4 511.1C520.4 512.5 518.4 514.1 516.7 517.0C515.0 519.9 513.8 524.1 513.0 528.2C512.2 532.3 513.2 538.5 512.2 541.5C511.2 544.5 509.1 544.3 507.0 546.0C504.9 547.7 501.0 549.7 499.6 551.9C498.2 554.1 498.6 556.8 498.9 559.3C499.1 561.8 499.5 565.5 501.1 566.7C502.7 567.9 505.4 567.0 508.5 566.7C511.6 566.5 516.6 565.2 519.7 565.2C522.8 565.2 525.0 567.7 527.0 566.7C529.0 565.7 529.6 559.3 531.5 559.3C533.4 559.3 536.1 565.5 538.2 566.7C540.3 567.9 542.2 567.7 544.1 566.7C546.0 565.7 547.2 562.5 549.3 560.8C551.4 559.1 555.7 558.5 556.7 556.3C557.7 554.1 555.5 551.8 555.2 547.4C555.0 543.0 555.7 534.4 555.2 529.7C554.7 525.0 554.0 522.3 552.3 519.3C550.6 516.3 547.9 513.6 544.9 511.9C541.9 510.2 538.1 509.0 534.5 508.9Z"/></clipPath><path d="M534.5 508.9C530.9 508.8 526.4 509.8 523.4 511.1C520.4 512.5 518.4 514.1 516.7 517.0C515.0 519.9 513.8 524.1 513.0 528.2C512.2 532.3 513.2 538.5 512.2 541.5C511.2 544.5 509.1 544.3 507.0 546.0C504.9 547.7 501.0 549.7 499.6 551.9C498.2 554.1 498.6 556.8 498.9 559.3C499.1 561.8 499.5 565.5 501.1 566.7C502.7 567.9 505.4 567.0 508.5 566.7C511.6 566.5 516.6 565.2 519.7 565.2C522.8 565.2 525.0 567.7 527.0 566.7C529.0 565.7 529.6 559.3 531.5 559.3C533.4 559.3 536.1 565.5 538.2 566.7C540.3 567.9 542.2 567.7 544.1 566.7C546.0 565.7 547.2 562.5 549.3 560.8C551.4 559.1 555.7 558.5 556.7 556.3C557.7 554.1 555.5 551.8 555.2 547.4C555.0 543.0 555.7 534.4 555.2 529.7C554.7 525.0 554.0 522.3 552.3 519.3C550.6 516.3 547.9 513.6 544.9 511.9C541.9 510.2 538.1 509.0 534.5 508.9Z" fill="#0c0c0c" stroke="#121212" stroke-width="1"/><g clip-path="url(#hc8)"><path d="M519.3 513.6Q506.4 535.6 503.2 568.7" stroke="#131313" stroke-width=".9" fill="none"/><path d="M519.6 515.4Q507.5 536.7 504.5 568.7" stroke="#151515" stroke-width=".9" fill="none"/><path d="M521.1 512.2Q512.7 534.8 510.5 568.7" stroke="#181818" stroke-width=".9" fill="none"/><path d="M522.4 518.9Q516.9 538.8 515.6 568.7" stroke="#151515" stroke-width=".9" fill="none"/><path d="M524.0 517.6Q522.5 538.0 522.2 568.7" stroke="#181818" stroke-width=".9" fill="none"/><path d="M524.6 512.1Q524.4 534.7 524.3 568.7" stroke="#161616" stroke-width=".9" fill="none"/><path d="M526.1 518.6Q529.4 538.7 530.3 568.7" stroke="#181818" stroke-width=".9" fill="none"/><path d="M527.5 521.4Q534.2 540.3 535.9 568.7" stroke="#131313" stroke-width=".9" fill="none"/><path d="M528.9 512.7Q539.2 535.1 541.8 568.7" stroke="#181818" stroke-width=".9" fill="none"/><path d="M529.3 512.6Q540.3 535.1 543.1 568.7" stroke="#151515" stroke-width=".9" fill="none"/><path d="M531.0 519.0Q546.4 538.9 550.2 568.7" stroke="#151515" stroke-width=".9" fill="none"/><path d="M532.1 513.8Q550.1 535.8 554.6 568.7" stroke="#131313" stroke-width=".9" fill="none"/><path d="M530.3 516.4l0.6 3.4" stroke="#484848" stroke-width="1" opacity=".8"/><path d="M538.6 523.2l0.3 4.3" stroke="#484848" stroke-width="1" opacity=".8"/><path d="M530.7 529.7l-0.2 3.5" stroke="#484848" stroke-width="1" opacity=".8"/><path d="M531.9 524.4l-0.6 4.1" stroke="#484848" stroke-width="1" opacity=".8"/><path d="M533.0 523.8l0.4 3.9" stroke="#484848" stroke-width="1" opacity=".8"/></g><path d="M511.5 540.5q0.3 1.4 0.9 2.7M514.0 540.5q0.1 2.1 -0.5 4.3M509.0 545.0q-0.6 1.4 -1.4 2.7M505.8 545.0q0.4 1.4 -0.2 2.7M500.4 550.9q0.9 1.1 1.1 2.3M497.2 550.9q-0.7 2.2 -1.2 4.4M500.4 558.3q0.7 1.5 0.2 3.0M500.9 558.3q0.1 1.2 -0.3 2.3M499.0 565.7q0.4 1.1 -1.4 2.2M501.9 565.7q0.1 2.0 -1.0 3.9M510.7 565.7q-0.7 1.6 0.3 3.2M506.9 565.7q-0.3 2.1 0.5 4.3M517.8 564.2q-0.3 1.4 -0.4 2.7M520.4 564.2q-0.9 1.6 0.4 3.2M528.9 565.7q0.6 2.1 0.9 4.2M525.4 565.7q-0.1 1.4 -1.1 2.8M530.0 558.3q0.6 1.3 0.9 2.6M530.9 558.3q0.4 1.1 0.4 2.3M539.3 565.7q-0.8 1.6 1.3 3.3M538.5 565.7q-0.1 2.0 -1.3 4.0M541.8 565.7q-0.6 1.1 -1.5 2.3M544.6 565.7q0.3 2.1 1.0 4.3M549.4 559.8q0.5 2.2 0.3 4.4M550.9 559.8q0.0 1.7 -0.5 3.4M556.1 555.3q-0.6 1.6 -0.6 3.3M555.7 555.3q-0.4 1.1 1.2 2.2M554.7 546.4q-0.8 1.8 -0.2 3.6M556.4 546.4q0.5 2.0 -0.5 4.0" stroke="#121212" stroke-width=".9" fill="none"/></g></svg>
<div class="t" style="left:59.90px;top:247px;font-size:10px;color:#d8d8d8;transform:scaleX(0.951);transform-origin:0 0;">[+ ] [Perspective ] [Standard ] [Default Shading ]</div>
<svg class="a" style="left:830px;top:265px;" width="75" height="50" viewBox="0 0 75 50"><ellipse cx="35.5" cy="37" rx="32" ry="8" fill="none" stroke="#9a9a9a" stroke-width="2.5"/><ellipse cx="35.5" cy="37" rx="28" ry="5.5" fill="#161616"/><rect x="22" y="7" width="32" height="29" fill="#8e8e8e"/><path d="M22 7l3-2h27l2 2" fill="#a0a0a0"/><text x="32" y="24" font-size="6" fill="#555" font-family="Liberation Sans">FRONT</text><path d="M4 40l4-1M62 41l5 1" stroke="#aaa" stroke-width="1.5"/></svg>
<svg class="a" style="left:66px;top:805px;" width="40" height="30" viewBox="0 0 40 30"><path d="M11 4V26" stroke="#2a2aa8" stroke-width="2"/><path d="M11 26H34" stroke="#b83a3a" stroke-width="2"/><path d="M8 18L6 25" stroke="#3a9a3a" stroke-width="2"/><text x="9" y="8" font-size="7" fill="#3a3ac0" font-family="Liberation Sans">z</text><text x="31" y="29" font-size="7" fill="#c04040" font-family="Liberation Sans">x</text><text x="2" y="24" font-size="7" fill="#40a040" font-family="Liberation Sans">y</text></svg>
<div class="a" style="left:915px;top:218px;width:165px;height:637px;background:#444;"></div>
<div class="a" style="left:920px;top:221px;width:158px;height:4px;background:repeating-linear-gradient(90deg,#888 0 1px,#444 1px 2px);"></div>
<div class="a" style="left:944px;top:228px;width:134px;height:23px;background:#3a3a3a;"></div>
<div class="a" style="left:971px;top:229px;width:1px;height:21px;background:#333;"></div>
<div class="a" style="left:998px;top:229px;width:1px;height:21px;background:#333;"></div>
<div class="a" style="left:1025px;top:229px;width:1px;height:21px;background:#333;"></div>
<div class="a" style="left:1052px;top:229px;width:1px;height:21px;background:#333;"></div>
<svg class="a" style="left:915px;top:222px;" width="165" height="58" viewBox="0 0 165 58"><path d="M17.5 10V24M10.5 17H24.5" stroke="#f0f0f0" stroke-width="1.8"/><g transform="translate(36 10)"><rect x="1.5" y="1.5" width="13" height="13" fill="none" stroke="#3d6664" stroke-width="1.2" stroke-dasharray="2 1.5"/><path d="M3 14q0-10 10-11" stroke="#9a9a9a" stroke-width="1.8" fill="none"/><g fill="#3f7a76"><rect x="0" y="0" width="3" height="3"/><rect x="12" y="0" width="3" height="3"/><rect x="0" y="12" width="3" height="3"/><rect x="12" y="12" width="3" height="3"/></g></g><g transform="translate(65 10)"><rect x="2" y="1" width="9" height="5" fill="#9c9c9c"/><path d="M6.5 6v3M1.5 9h10M1.5 9v3.5M11.5 9v3.5" stroke="#9c9c9c" stroke-width="1.3" fill="none"/><rect x="0" y="12" width="3" height="3" fill="#3f7a76"/><rect x="10" y="12" width="3" height="3" fill="#3f7a76"/></g><g transform="translate(90 10)"><path d="M6 1a7 7 0 0 0 0 14a8 8 0 0 1 0-14z" fill="#2e5856"/><circle cx="9.5" cy="8" r="6" fill="#a8a8a8"/></g><g transform="translate(117 10)"><rect x="1" y="1" width="14" height="9" fill="#b4b4b4"/><path d="M5 14q3-2 6 0" stroke="#b4b4b4" stroke-width="1.5" fill="none"/></g><g transform="translate(145 10)"><path d="M6 6l8 8" stroke="#9a9a9a" stroke-width="2.6" stroke-linecap="round"/><path d="M1 3a4.5 4.5 0 0 0 6 5l-1.6-1.6.6-2.6-2.6-.6z" fill="#9a9a9a"/></g></svg>
<div class="a" style="left:921px;top:255px;width:20px;height:21px;background:#5b8bd0;border-radius:2px;border:1px solid #3a5f96"></div>
<svg class="a" style="left:915px;top:254px;" width="165" height="24" viewBox="0 0 165 24"><circle cx="16" cy="11.5" r="6.3" fill="#e2e2e2" stroke="#2f4058" stroke-width="1"/><g transform="translate(32 4)"><circle cx="5" cy="6" r="4.5" fill="#dcdcdc"/><rect x="5.5" y="6.5" width="7" height="7" fill="#dcdcdc" stroke="#444" stroke-width="1"/></g><g transform="translate(55 4)"><circle cx="5" cy="5" r="4.5" fill="#dcdcdc"/><rect x="3" y="9.5" width="4" height="2" fill="#dcdcdc"/><rect x="3.5" y="12" width="3" height="1.5" fill="#dcdcdc"/></g><g transform="translate(75 6)"><rect x="0.5" y="1" width="9" height="10" fill="#dcdcdc"/><path d="M9.5 6l3.5-3v7z" fill="#dcdcdc"/></g><g transform="translate(97 4)"><path d="M1.5 13.5V1L12.5 13.5Z" fill="none" stroke="#dcdcdc" stroke-width="1.8"/><path d="M3 7h3M3 10h2" stroke="#dcdcdc" stroke-width="1.2"/></g><g transform="translate(120 5)" fill="none" stroke="#d0d0d0" stroke-width="1.4"><path d="M0 3q3-3 6 0t6 0"/><path d="M0 7.5q3-3 6 0t6 0"/><path d="M0 12q3-3 6 0t6 0"/></g><g transform="translate(142 4)" fill="none" stroke="#d4d4d4" stroke-width="1.6"><circle cx="4" cy="4" r="2.6" stroke-dasharray="1.5 1"/><circle cx="9" cy="10" r="3.2" stroke-dasharray="1.7 1"/></g></svg>
<div class="a" style="left:921px;top:281px;width:157px;height:17px;background:#595959;"></div>
<div class="t" style="left:924.75px;top:286px;font-size:10px;color:#dadada;transform:scaleX(0.899);transform-origin:0 0;">Standard Primitives</div>
<svg class="a" style="left:1066px;top:287px;" width="7" height="5" viewBox="0 0 7 5"><path d="M0 0H7L3.5 4.5Z" fill="#eee"/></svg>
<div class="a" style="left:921px;top:302px;width:151px;height:166px;background:#4d4d4d;border:1px solid #3a3a3a"></div>
<div class="a" style="left:1072px;top:302px;width:8px;height:553px;background:#434343;border-left:1px solid #3a3a3a"></div>
<svg class="a" style="left:925px;top:307px;" width="8" height="6" viewBox="0 0 8 6"><path d="M0 0H7L3.5 4.5Z" fill="#ccc"/></svg>
<div class="t" style="left:937.50px;top:307px;font-size:10px;color:#ececec;font-weight:bold;transform:scaleX(1.009);transform-origin:0 0;">Object Type</div>
<svg class="a" style="left:1059px;top:307px;" width="6" height="6" viewBox="0 0 6 6"><g fill="#777"><rect x="0" y="0" width="2" height="2"/><rect x="3" y="0" width="2" height="2"/><rect x="0" y="3" width="2" height="2"/><rect x="3" y="3" width="2" height="2"/></g></svg>
<div class="a" style="left:971px;top:325px;width:10px;height:10px;background:#505050;border:1px solid #5a5a5a"></div>
<div class="t" style="left:985.50px;top:327px;font-size:10px;color:#7d7d7d;transform:scaleX(0.873);transform-origin:0 0;">AutoGrid</div>
<div class="a" style="left:925px;top:343px;width:70px;height:17px;background:#5c5c5c;border-radius:2px;border-bottom:1px solid #3e3e3e"></div>
<div class="t" style="left:952.25px;top:348px;font-size:10px;color:#dcdcdc;transform:scaleX(0.899);transform-origin:0 0;">Box</div>
<div class="a" style="left:999px;top:343px;width:68px;height:17px;background:#5c5c5c;border-radius:2px;border-bottom:1px solid #3e3e3e"></div>
<div class="t" style="left:1022.50px;top:348px;font-size:10px;color:#dcdcdc;transform:scaleX(0.880);transform-origin:0 0;">Cone</div>
<div class="a" style="left:925px;top:364px;width:70px;height:17px;background:#5c5c5c;border-radius:2px;border-bottom:1px solid #3e3e3e"></div>
<div class="t" style="left:945.60px;top:369px;font-size:10px;color:#dcdcdc;transform:scaleX(0.893);transform-origin:0 0;">Sphere</div>
<div class="a" style="left:999px;top:364px;width:68px;height:17px;background:#5c5c5c;border-radius:2px;border-bottom:1px solid #3e3e3e"></div>
<div class="t" style="left:1010.50px;top:369px;font-size:10px;color:#dcdcdc;transform:scaleX(0.880);transform-origin:0 0;">GeoSphere</div>
<div class="a" style="left:925px;top:385px;width:70px;height:17px;background:#5c5c5c;border-radius:2px;border-bottom:1px solid #3e3e3e"></div>
<div class="t" style="left:943.75px;top:390px;font-size:10px;color:#dcdcdc;transform:scaleX(0.887);transform-origin:0 0;">Cylinder</div>
<div class="a" style="left:999px;top:385px;width:68px;height:17px;background:#5c5c5c;border-radius:2px;border-bottom:1px solid #3e3e3e"></div>
<div class="t" style="left:1023.40px;top:390px;font-size:10px;color:#dcdcdc;transform:scaleX(0.858);transform-origin:0 0;">Tube</div>
<div class="a" style="left:925px;top:406px;width:70px;height:17px;background:#5c5c5c;border-radius:2px;border-bottom:1px solid #3e3e3e"></div>
<div class="t" style="left:948.55px;top:411px;font-size:10px;color:#dcdcdc;transform:scaleX(0.935);transform-origin:0 0;">Torus</div>
<div class="a" style="left:999px;top:406px;width:68px;height:17px;background:#5c5c5c;border-radius:2px;border-bottom:1px solid #3e3e3e"></div>
<div class="t" style="left:1016.60px;top:411px;font-size:10px;color:#dcdcdc;transform:scaleX(0.896);transform-origin:0 0;">Pyramid</div>
<div class="a" style="left:925px;top:427px;width:70px;height:17px;background:#5c5c5c;border-radius:2px;border-bottom:1px solid #3e3e3e"></div>
<div class="t" style="left:945.50px;top:432px;font-size:10px;color:#dcdcdc;transform:scaleX(0.967);transform-origin:0 0;">Teapot</div>
<div class="a" style="left:999px;top:427px;width:68px;height:17px;background:#5c5c5c;border-radius:2px;border-bottom:1px solid #3e3e3e"></div>
<div class="t" style="left:1021.70px;top:432px;font-size:10px;color:#dcdcdc;transform:scaleX(0.882);transform-origin:0 0;">Plane</div>
<div class="a" style="left:925px;top:448px;width:70px;height:17px;background:#5c5c5c;border-radius:2px;border-bottom:1px solid #3e3e3e"></div>
<div class="t" style="left:942.80px;top:453px;font-size:10px;color:#dcdcdc;transform:scaleX(0.911);transform-origin:0 0;">TextPlus</div>
<div class="a" style="left:921px;top:473px;width:151px;height:40px;background:#4d4d4d;border:1px solid #3a3a3a"></div>
<svg class="a" style="left:925px;top:478px;" width="8" height="6" viewBox="0 0 8 6"><path d="M0 0H7L3.5 4.5Z" fill="#ccc"/></svg>
<div class="t" style="left:936.70px;top:477px;font-size:10px;color:#ececec;font-weight:bold;transform:scaleX(0.976);transform-origin:0 0;">Name and Color</div>
<svg class="a" style="left:1059px;top:477px;" width="6" height="6" viewBox="0 0 6 6"><g fill="#777"><rect x="0" y="0" width="2" height="2"/><rect x="3" y="0" width="2" height="2"/><rect x="0" y="3" width="2" height="2"/><rect x="3" y="3" width="2" height="2"/></g></svg>
<div class="a" style="left:925px;top:491px;width:122px;height:17px;background:#595959;border-radius:2px"></div>
<div class="a" style="left:1050px;top:491px;width:18px;height:18px;background:#d22a8a;border:1px solid #2a0a1a"></div>
<div class="a" style="left:0px;top:855px;width:1080px;height:22px;background:#444;"></div>
<div class="a" style="left:0px;top:858px;width:4px;height:87px;background:repeating-linear-gradient(#777 0 1px,#3a3a3a 1px 2px);left:1px;width:3px"></div>
<div class="a" style="left:8px;top:860px;width:12px;height:13px;background:#555;border-radius:2px"></div>
<div class="t" style="left:10px;top:861px;font-size:11px;color:#cfcfcf;">&lt;</div>
<div class="a" style="left:21px;top:860px;width:104px;height:13px;background:#5a5a5a;border-radius:2px"></div>
<div class="t" style="left:57.80px;top:863px;font-size:10px;color:#d8d8d8;transform:scaleX(0.927);transform-origin:0 0;">0 / 100</div>
<div class="a" style="left:127px;top:860px;width:12px;height:13px;background:#555;border-radius:2px"></div>
<div class="t" style="left:129px;top:861px;font-size:11px;color:#cfcfcf;">&gt;</div>
<div class="a" style="left:7px;top:877px;width:1073px;height:1px;background:#1a1a1a;"></div>
<div class="a" style="left:7px;top:878px;width:43px;height:21px;background:#3c3c3c;"></div>
<div class="a" style="left:50px;top:878px;width:989px;height:21px;background:#2b2b2b;"></div>
<svg class="a" style="left:16px;top:882px;" width="16" height="12" viewBox="0 0 16 12"><g fill="#ddd"><rect x="1" y="1" width="2" height="2"/><rect x="1" y="4" width="2" height="2"/><rect x="1" y="7" width="2" height="2"/><rect x="1" y="10" width="2" height="2"/></g><path d="M5 8q2-9 4-3t4-2" stroke="#3fb0b0" stroke-width="1.5" fill="none"/></svg>
<svg class="a" style="left:50px;top:878px;" width="989" height="21" viewBox="0 0 989 21"><path d="M12.8 1V10" stroke="#6e6e6e" stroke-width="1"/><path d="M22.6 1V10" stroke="#6e6e6e" stroke-width="1"/><path d="M32.4 1V10" stroke="#6e6e6e" stroke-width="1"/><path d="M42.3 1V10" stroke="#6e6e6e" stroke-width="1"/><path d="M52.1 1V10" stroke="#6e6e6e" stroke-width="1"/><path d="M61.9 1V10" stroke="#6e6e6e" stroke-width="1"/><path d="M71.7 1V10" stroke="#6e6e6e" stroke-width="1"/><path d="M81.5 1V10" stroke="#6e6e6e" stroke-width="1"/><path d="M91.3 1V10" stroke="#6e6e6e" stroke-width="1"/><path d="M101.2 1V10" stroke="#6e6e6e" stroke-width="1"/><path d="M111.0 1V10" stroke="#6e6e6e" stroke-width="1"/><path d="M120.8 1V10" stroke="#6e6e6e" stroke-width="1"/><path d="M130.6 1V10" stroke="#6e6e6e" stroke-width="1"/><path d="M140.4 1V10" stroke="#6e6e6e" stroke-width="1"/><path d="M150.2 1V10" stroke="#6e6e6e" stroke-width="1"/><path d="M160.1 1V10" stroke="#6e6e6e" stroke-width="1"/><path d="M169.9 1V10" stroke="#6e6e6e" stroke-width="1"/><path d="M179.7 1V10" stroke="#6e6e6e" stroke-width="1"/><path d="M189.5 1V10" stroke="#6e6e6e" stroke-width="1"/><path d="M199.3 1V10" stroke="#6e6e6e" stroke-width="1"/><path d="M209.1 1V10" stroke="#6e6e6e" stroke-width="1"/><path d="M219.0 1V10" stroke="#6e6e6e" stroke-width="1"/><path d="M228.8 1V10" stroke="#6e6e6e" stroke-width="1"/><path d="M238.6 1V10" stroke="#6e6e6e" stroke-width="1"/><path d="M248.4 1V10" stroke="#6e6e6e" stroke-width="1"/><path d="M258.2 1V10" stroke="#6e6e6e" stroke-width="1"/><path d="M268.0 1V10" stroke="#6e6e6e" stroke-width="1"/><path d="M277.8 1V10" stroke="#6e6e6e" stroke-width="1"/><path d="M287.7 1V10" stroke="#6e6e6e" stroke-width="1"/><path d="M297.5 1V10" stroke="#6e6e6e" stroke-width="1"/><path d="M307.3 1V10" stroke="#6e6e6e" stroke-width="1"/><path d="M317.1 1V10" stroke="#6e6e6e" stroke-width="1"/><path d="M326.9 1V10" stroke="#6e6e6e" stroke-width="1"/><path d="M336.7 1V10" stroke="#6e6e6e" stroke-width="1"/><path d="M346.6 1V10" stroke="#6e6e6e" stroke-width="1"/><path d="M356.4 1V10" stroke="#6e6e6e" stroke-width="1"/><path d="M366.2 1V10" stroke="#6e6e6e" stroke-width="1"/><path d="M376.0 1V10" stroke="#6e6e6e" stroke-width="1"/><path d="M385.8 1V10" stroke="#6e6e6e" stroke-width="1"/><path d="M395.6 1V10" stroke="#6e6e6e" stroke-width="1"/><path d="M405.5 1V10" stroke="#6e6e6e" stroke-width="1"/><path d="M415.3 1V10" stroke="#6e6e6e" stroke-width="1"/><path d="M425.1 1V10" stroke="#6e6e6e" stroke-width="1"/><path d="M434.9 1V10" stroke="#6e6e6e" stroke-width="1"/><path d="M444.7 1V10" stroke="#6e6e6e" stroke-width="1"/><path d="M454.5 1V10" stroke="#6e6e6e" stroke-width="1"/><path d="M464.4 1V10" stroke="#6e6e6e" stroke-width="1"/><path d="M474.2 1V10" stroke="#6e6e6e" stroke-width="1"/><path d="M484.0 1V10" stroke="#6e6e6e" stroke-width="1"/><path d="M493.8 1V10" stroke="#6e6e6e" stroke-width="1"/><path d="M503.6 1V10" stroke="#6e6e6e" stroke-width="1"/><path d="M513.4 1V10" stroke="#6e6e6e" stroke-width="1"/><path d="M523.2 1V10" stroke="#6e6e6e" stroke-width="1"/><path d="M533.1 1V10" stroke="#6e6e6e" stroke-width="1"/><path d="M542.9 1V10" stroke="#6e6e6e" stroke-width="1"/><path d="M552.7 1V10" stroke="#6e6e6e" stroke-width="1"/><path d="M562.5 1V10" stroke="#6e6e6e" stroke-width="1"/><path d="M572.3 1V10" stroke="#6e6e6e" stroke-width="1"/><path d="M582.1 1V10" stroke="#6e6e6e" stroke-width="1"/><path d="M592.0 1V10" stroke="#6e6e6e" stroke-width="1"/><path d="M601.8 1V10" stroke="#6e6e6e" stroke-width="1"/><path d="M611.6 1V10" stroke="#6e6e6e" stroke-width="1"/><path d="M621.4 1V10" stroke="#6e6e6e" stroke-width="1"/><path d="M631.2 1V10" stroke="#6e6e6e" stroke-width="1"/><path d="M641.0 1V10" stroke="#6e6e6e" stroke-width="1"/><path d="M650.9 1V10" stroke="#6e6e6e" stroke-width="1"/><path d="M660.7 1V10" stroke="#6e6e6e" stroke-width="1"/><path d="M670.5 1V10" stroke="#6e6e6e" stroke-width="1"/><path d="M680.3 1V10" stroke="#6e6e6e" stroke-width="1"/><path d="M690.1 1V10" stroke="#6e6e6e" stroke-width="1"/><path d="M699.9 1V10" stroke="#6e6e6e" stroke-width="1"/><path d="M709.8 1V10" stroke="#6e6e6e" stroke-width="1"/><path d="M719.6 1V10" stroke="#6e6e6e" stroke-width="1"/><path d="M729.4 1V10" stroke="#6e6e6e" stroke-width="1"/><path d="M739.2 1V10" stroke="#6e6e6e" stroke-width="1"/><path d="M749.0 1V10" stroke="#6e6e6e" stroke-width="1"/><path d="M758.8 1V10" stroke="#6e6e6e" stroke-width="1"/><path d="M768.6 1V10" stroke="#6e6e6e" stroke-width="1"/><path d="M778.5 1V10" stroke="#6e6e6e" stroke-width="1"/><path d="M788.3 1V10" stroke="#6e6e6e" stroke-width="1"/><path d="M798.1 1V10" stroke="#6e6e6e" stroke-width="1"/><path d="M807.9 1V10" stroke="#6e6e6e" stroke-width="1"/><path d="M817.7 1V10" stroke="#6e6e6e" stroke-width="1"/><path d="M827.5 1V10" stroke="#6e6e6e" stroke-width="1"/><path d="M837.4 1V10" stroke="#6e6e6e" stroke-width="1"/><path d="M847.2 1V10" stroke="#6e6e6e" stroke-width="1"/><path d="M857.0 1V10" stroke="#6e6e6e" stroke-width="1"/><path d="M866.8 1V10" stroke="#6e6e6e" stroke-width="1"/><path d="M876.6 1V10" stroke="#6e6e6e" stroke-width="1"/><path d="M886.4 1V10" stroke="#6e6e6e" stroke-width="1"/><path d="M896.3 1V10" stroke="#6e6e6e" stroke-width="1"/><path d="M906.1 1V10" stroke="#6e6e6e" stroke-width="1"/><path d="M915.9 1V10" stroke="#6e6e6e" stroke-width="1"/><path d="M925.7 1V10" stroke="#6e6e6e" stroke-width="1"/><path d="M935.5 1V10" stroke="#6e6e6e" stroke-width="1"/><path d="M945.3 1V10" stroke="#6e6e6e" stroke-width="1"/><path d="M955.2 1V10" stroke="#6e6e6e" stroke-width="1"/><path d="M965.0 1V10" stroke="#6e6e6e" stroke-width="1"/><path d="M974.8 1V10" stroke="#6e6e6e" stroke-width="1"/><path d="M984.6 1V10" stroke="#6e6e6e" stroke-width="1"/></svg>
<div class="t" style="left:100.38px;top:890px;font-size:9px;color:#cfcfcf;transform:scaleX(0.880);transform-origin:0 0;">5</div>
<div class="t" style="left:147.06px;top:890px;font-size:9px;color:#cfcfcf;transform:scaleX(0.920);transform-origin:0 0;">10</div>
<div class="t" style="left:196.14px;top:890px;font-size:9px;color:#cfcfcf;transform:scaleX(0.920);transform-origin:0 0;">15</div>
<div class="t" style="left:245.22px;top:890px;font-size:9px;color:#cfcfcf;transform:scaleX(0.920);transform-origin:0 0;">20</div>
<div class="t" style="left:294.30px;top:890px;font-size:9px;color:#cfcfcf;transform:scaleX(0.920);transform-origin:0 0;">25</div>
<div class="t" style="left:343.38px;top:890px;font-size:9px;color:#cfcfcf;transform:scaleX(0.920);transform-origin:0 0;">30</div>
<div class="t" style="left:392.46px;top:890px;font-size:9px;color:#cfcfcf;transform:scaleX(0.920);transform-origin:0 0;">35</div>
<div class="t" style="left:441.54px;top:890px;font-size:9px;color:#cfcfcf;transform:scaleX(0.920);transform-origin:0 0;">40</div>
<div class="t" style="left:490.62px;top:890px;font-size:9px;color:#cfcfcf;transform:scaleX(0.920);transform-origin:0 0;">45</div>
<div class="t" style="left:539.70px;top:890px;font-size:9px;color:#cfcfcf;transform:scaleX(0.920);transform-origin:0 0;">50</div>
<div class="t" style="left:588.78px;top:890px;font-size:9px;color:#cfcfcf;transform:scaleX(0.920);transform-origin:0 0;">55</div>
<div class="t" style="left:637.86px;top:890px;font-size:9px;color:#cfcfcf;transform:scaleX(0.920);transform-origin:0 0;">60</div>
<div class="t" style="left:686.94px;top:890px;font-size:9px;color:#cfcfcf;transform:scaleX(0.920);transform-origin:0 0;">65</div>
<div class="t" style="left:736.02px;top:890px;font-size:9px;color:#cfcfcf;transform:scaleX(0.920);transform-origin:0 0;">70</div>
<div class="t" style="left:785.10px;top:890px;font-size:9px;color:#cfcfcf;transform:scaleX(0.920);transform-origin:0 0;">75</div>
<div class="t" style="left:834.18px;top:890px;font-size:9px;color:#cfcfcf;transform:scaleX(0.920);transform-origin:0 0;">80</div>
<div class="t" style="left:883.26px;top:890px;font-size:9px;color:#cfcfcf;transform:scaleX(0.920);transform-origin:0 0;">85</div>
<div class="t" style="left:932.34px;top:890px;font-size:9px;color:#cfcfcf;transform:scaleX(0.920);transform-origin:0 0;">90</div>
<div class="t" style="left:981.42px;top:890px;font-size:9px;color:#cfcfcf;transform:scaleX(0.920);transform-origin:0 0;">95</div>
<div class="t" style="left:1028.35px;top:890px;font-size:9px;color:#cfcfcf;transform:scaleX(0.900);transform-origin:0 0;">100</div>
<div class="a" style="left:50px;top:879px;width:8px;height:20px;background:#8c8436;border:1px solid #b8ae50"></div>
<div class="t" style="left:51px;top:889px;font-size:10px;color:#e8e090;">0</div>
<div class="a" style="left:0px;top:900px;width:1080px;height:45px;background:#444;"></div>
<div class="a" style="left:3px;top:903px;width:82px;height:21px;background:#dcc3c3;border:1px solid #fff"></div>
<div class="a" style="left:3px;top:924px;width:82px;height:19px;background:#fcfcfc;border:1px solid #ddd"></div>
<div class="t" style="left:7.80px;top:927px;font-size:10px;color:#9a9a9a;font-family:'Liberation Mono',monospace;transform:scaleX(1.010);transform-origin:0 0;">MAXScript Mi</div>
<div class="a" style="left:86px;top:901px;width:5px;height:44px;background:#363636;"></div>
<div class="a" style="left:88px;top:901px;width:2px;height:44px;background:#1e1e1e;"></div>
<div class="t" style="left:93.30px;top:911px;font-size:10px;color:#e0e0e0;transform:scaleX(0.884);transform-origin:0 0;">None Selected</div>
<div class="t" style="left:93.30px;top:932px;font-size:10px;color:#e0e0e0;transform:scaleX(0.907);transform-origin:0 0;">Click and drag to select and move objects</div>
<svg class="a" style="left:323px;top:906px;" width="15" height="15" viewBox="0 0 15 15"><g fill="none" stroke="#777" stroke-width="1.4"><path d="M1 5V1h4M10 1h4v4M14 10v4h-4M5 14H1v-4"/><rect x="4.5" y="4.5" width="6" height="6"/></g></svg>
<svg class="a" style="left:347px;top:906px;" width="12" height="15" viewBox="0 0 12 15"><g fill="none" stroke="#777" stroke-width="1.4"><path d="M3 7V4a3 3 0 0 1 6 0v3"/><rect x="1.5" y="7" width="9" height="7"/></g></svg>
<svg class="a" style="left:369px;top:906px;" width="14" height="14" viewBox="0 0 14 14"><rect x="1" y="1" width="12" height="12" fill="#ddd"/><path d="M7 3l4 4-4 4-4-4z" fill="#333"/><circle cx="7" cy="7" r="1.4" fill="#ddd"/></svg>
<div class="t" style="left:390.00px;top:911px;font-size:10px;color:#dcdcdc;transform:scaleX(0.842);transform-origin:0 0;">X:</div>
<div class="a" style="left:401px;top:907px;width:48px;height:15px;background:#555;"></div>
<div class="t" style="left:403.00px;top:911px;font-size:10px;color:#7a7a7a;transform:scaleX(0.922);transform-origin:0 0;">132,926</div>
<div class="t" style="left:460.00px;top:911px;font-size:10px;color:#dcdcdc;transform:scaleX(0.901);transform-origin:0 0;">Y:</div>
<div class="a" style="left:471px;top:907px;width:49px;height:15px;background:#555;"></div>
<div class="t" style="left:473.30px;top:911px;font-size:10px;color:#7a7a7a;transform:scaleX(1.215);transform-origin:0 0;">0,77</div>
<div class="t" style="left:531.50px;top:911px;font-size:10px;color:#dcdcdc;transform:scaleX(0.845);transform-origin:0 0;">Z:</div>
<div class="a" style="left:542px;top:907px;width:49px;height:15px;background:#555;"></div>
<div class="t" style="left:544.40px;top:911px;font-size:10px;color:#7a7a7a;transform:scaleX(1.074);transform-origin:0 0;">0,0</div>
<div class="t" style="left:603.70px;top:911px;font-size:10px;color:#dcdcdc;transform:scaleX(0.931);transform-origin:0 0;">Grid = 10,0</div>
<div class="a" style="left:475px;top:927px;width:1px;height:15px;background:#222;"></div>
<div class="a" style="left:481px;top:927px;width:16px;height:15px;background:#5a5a5a;border-radius:2px"></div>
<svg class="a" style="left:483px;top:929px;" width="12" height="12" viewBox="0 0 12 12"><circle cx="6" cy="6" r="5" fill="#ddd"/><path d="M6 1V11M1 6H11" stroke="#555" stroke-width="1.2"/><path d="M6 1a5 5 0 0 1 5 5H6z" fill="#555"/></svg>
<div class="t" style="left:502.00px;top:931px;font-size:10px;color:#dcdcdc;transform:scaleX(0.886);transform-origin:0 0;">Enabled:</div>
<svg class="a" style="left:541px;top:930px;" width="10" height="10" viewBox="0 0 10 10"><circle cx="5" cy="5" r="4.5" fill="#4cc74c"/></svg>
<div class="a" style="left:555px;top:927px;width:16px;height:15px;background:#555;border-radius:2px"></div>
<svg class="a" style="left:556px;top:928px;" width="14" height="13" viewBox="0 0 14 13"><circle cx="7" cy="6.5" r="5.5" fill="#f0f0f0"/><text x="4.5" y="9.5" font-size="8" fill="#333" font-family="Liberation Sans">0</text></svg>
<div class="a" style="left:577px;top:927px;width:1px;height:15px;background:#222;"></div>
<svg class="a" style="left:584px;top:928px;" width="13" height="13" viewBox="0 0 13 13"><path d="M6.5 1l5 2.5v6l-5 2.5-5-2.5v-6z M1.5 3.5l5 2.5 5-2.5M6.5 6v6" fill="none" stroke="#ddd" stroke-width="1.2"/></svg>
<div class="t" style="left:603.70px;top:931px;font-size:10px;color:#dcdcdc;transform:scaleX(0.898);transform-origin:0 0;">Add Time Tag</div>
<svg class="a" style="left:698px;top:906px;" width="100" height="15" viewBox="0 0 100 15"><g fill="#e0e0e0"><rect x="1" y="4" width="2" height="8"/><path d="M4 8l5-4v8zM9 8l5-4v8z"/><path d="M24 8l5-4v8z"/><rect x="30" y="4" width="2" height="8"/><rect x="33" y="4" width="2" height="8"/><path d="M45 1l11 7-11 7z"/><rect x="62" y="4" width="2" height="8"/><rect x="65" y="4" width="2" height="8"/><path d="M68 8l5-4v8z" transform="translate(141 0) scale(-1 1)"/><path d="M84 4l5 4-5 4zM89 4l5 4-5 4z"/><rect x="95" y="4" width="2" height="8"/></g><path d="M55 15h-3l3-3z" fill="#ddd"/></svg>
<svg class="a" style="left:699px;top:926px;" width="14" height="13" viewBox="0 0 14 13"><path d="M1 6.5l4-3.5v7zM13 6.5l-4-3.5v7z" fill="#ddd"/></svg>
<div class="a" style="left:717px;top:926px;width:1px;height:15px;background:#222;"></div>
<div class="a" style="left:719px;top:926px;width:58px;height:13px;background:#555;"></div>
<div class="t" style="left:722.00px;top:929px;font-size:10px;color:#dcdcdc;">0</div>
<svg class="a" style="left:768px;top:927px;" width="6" height="10" viewBox="0 0 6 10"><path d="M0 4l3-3 3 3zM0 6l3 3 3-3z" fill="#ccc"/></svg>
<div class="a" style="left:779px;top:926px;width:1px;height:15px;background:#222;"></div>
<svg class="a" style="left:782px;top:925px;" width="15" height="16" viewBox="0 0 15 16"><circle cx="6" cy="6" r="5" fill="#ddd"/><path d="M6 3v3h3" stroke="#444" stroke-width="1.2" fill="none"/><circle cx="10.5" cy="11" r="3.5" fill="none" stroke="#e3a63b" stroke-width="1.8"/></svg>
<div class="a" style="left:808px;top:905px;width:35px;height:37px;background:#575757;border-radius:2px;border:1px solid #3a3a3a"></div>
<svg class="a" style="left:812px;top:910px;" width="28" height="28" viewBox="0 0 28 28"><path d="M10 3V21M2 12H19" stroke="#e8e8e8" stroke-width="5"/><circle cx="20" cy="17" r="3" fill="none" stroke="#3fb0b0" stroke-width="1.8"/><path d="M18 19l-6 6M13 22l2 2" stroke="#3fb0b0" stroke-width="1.8"/></svg>
<div class="a" style="left:847px;top:906px;width:40px;height:16px;background:#595959;border-radius:2px"></div>
<div class="t" style="left:848.20px;top:911px;font-size:10px;color:#e0e0e0;transform:scaleX(0.906);transform-origin:0 0;">Auto Key</div>
<div class="a" style="left:847px;top:925px;width:40px;height:16px;background:#595959;border-radius:2px"></div>
<div class="t" style="left:850.70px;top:930px;font-size:10px;color:#e0e0e0;transform:scaleX(0.877);transform-origin:0 0;">Set Key</div>
<div class="a" style="left:890px;top:906px;width:97px;height:16px;background:#595959;border-radius:2px"></div>
<div class="t" style="left:894.80px;top:910px;font-size:10px;color:#e0e0e0;transform:scaleX(0.880);transform-origin:0 0;">Selected</div>
<svg class="a" style="left:975px;top:912px;" width="7" height="4" viewBox="0 0 7 4"><path d="M0 0H7L3.5 4Z" fill="#ddd"/></svg>
<svg class="a" style="left:892px;top:925px;" width="17" height="17" viewBox="0 0 17 17"><g fill="none" stroke="#3fb0b0" stroke-width="1.5"><circle cx="4" cy="3" r="2"/><circle cx="12" cy="3" r="2"/><path d="M2 15q1-8 4-9M14 15q-1-8-4-9"/></g><path d="M17 17h-3l3-3z" fill="#ddd"/></svg>
<div class="a" style="left:913px;top:925px;width:74px;height:16px;background:#595959;border-radius:2px"></div>
<div class="t" style="left:923.00px;top:930px;font-size:10px;color:#e0e0e0;transform:scaleX(0.940);transform-origin:0 0;">Key Filters...</div>
<svg class="a" style="left:990px;top:900px;" width="90" height="45" viewBox="0 0 90 45"><g fill="none" stroke="#dedede" stroke-width="1.6"><circle cx="15.5" cy="11.5" r="4.3"/><path d="M12.5 14.5L8.5 19.5"/></g><g fill="#3fb0b0"><rect x="30" y="7" width="3.5" height="3.5"/><rect x="35" y="7" width="3.5" height="3.5"/><rect x="35" y="12" width="3.5" height="3.5"/></g><g fill="none" stroke="#dedede" stroke-width="1.4"><circle cx="33" cy="14" r="3.2"/><path d="M30.7 16.3L27.5 20"/></g><g fill="none" stroke="#e6e6e6" stroke-width="1.5"><path d="M47 11V8h3M56 8h3v3M59 17v3h-3M50 20h-3v-3"/></g><path d="M53 9.5l5 2.6v5.2l-5 2.6-5-2.6v-5.2z" fill="#3fb0b0"/><path d="M48 12.1l5 2.6 5-2.6M53 14.7v5.2" stroke="#1d5a58" stroke-width=".8" fill="none"/><path d="M61 23h-4l4-4z" fill="#e6e6e6"/><path d="M74 7l5 2.5v7l-5 2.5-5-2.5v-7z" fill="#3fb0b0"/><path d="M64 14l3-2 3 2-3 2z M67 18l3-2 3 2-3 2z M69 11l2-1.5 2 1.5-2 1.5z" fill="#cfeeee"/><path d="M82 23h-4l4-4z" fill="#e6e6e6"/><path d="M10 28L18 33L10 38" fill="none" stroke="#dedede" stroke-width="1.5"/><path d="M23 41h-4l4-4z" fill="#e6e6e6"/><path d="M31 39v-6.5a1 1 0 0 1 2 0V28a1 1 0 0 1 2 0v4V27a1 1 0 0 1 2 0v5v-4a1 1 0 0 1 2 0v6.5q0 4.5-4.5 4.5z" fill="#dcdcdc"/><path d="M43 41h-4l4-4z" fill="#e6e6e6"/><ellipse cx="54" cy="33" rx="7" ry="3.2" transform="rotate(-25 54 33)" fill="none" stroke="#dedede" stroke-width="1.5"/><circle cx="53" cy="31.5" r="3.5" fill="#3fb0b0"/><path d="M62 41h-4l4-4z" fill="#e6e6e6"/><rect x="66" y="26.5" width="12" height="12" fill="#e2e2e2"/><rect x="67.5" y="32" width="5" height="5" fill="#333"/><path d="M71 34L77 28M74 28h3v3" stroke="#333" stroke-width="1.2" fill="none"/></svg>
</body></html>
